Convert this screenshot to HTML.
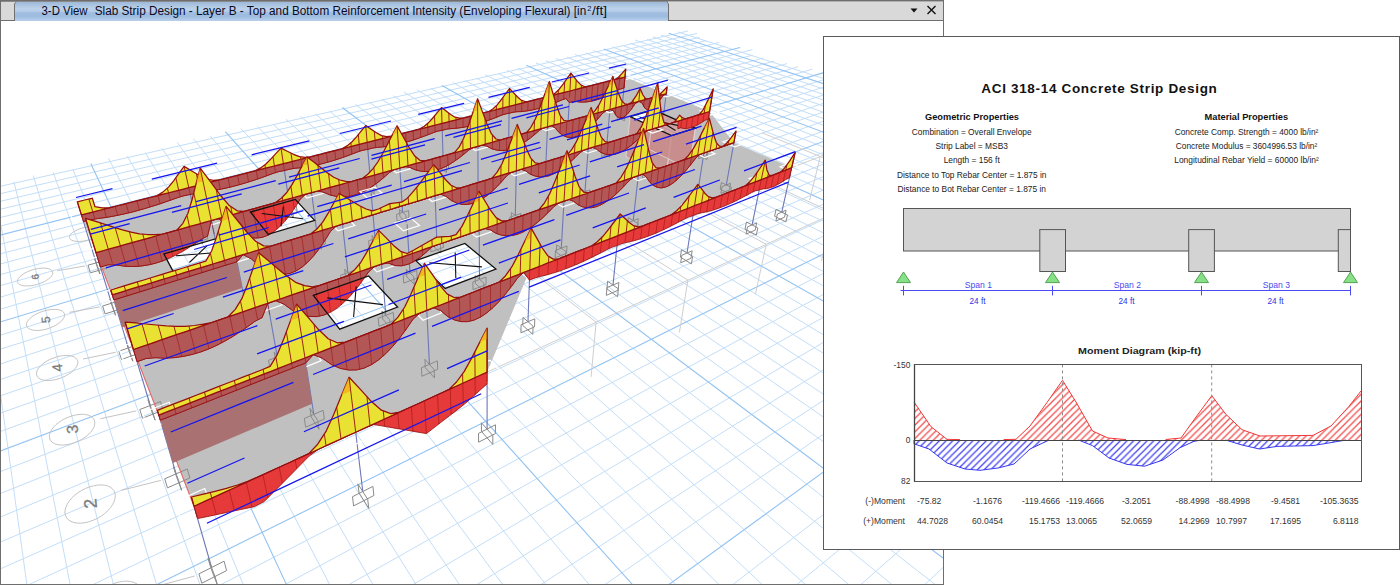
<!DOCTYPE html>
<html><head><meta charset="utf-8"><title>3-D View</title>
<style>
html,body{margin:0;padding:0;background:#fff;}
body{width:1400px;height:585px;position:relative;overflow:hidden;font-family:"Liberation Sans",sans-serif;}
#view{position:absolute;left:0;top:0;width:944px;height:585px;}
#pop{position:absolute;left:823px;top:36px;width:575px;height:512px;border:1px solid #5a5a5a;background:#fff;}
#pop svg{position:absolute;left:-824px;top:-37px;}
</style></head><body>
<svg id="view" width="944" height="585" viewBox="0 0 944 585">
<rect x="0" y="0" width="944" height="585" fill="#fff"/>
<g id="scene">
<path d="M-5566.1 6772.8 L-477.1 289.8 M-5186.6 6772.8 L-446.7 285.5 M-4807.2 6772.8 L-413.8 276.8 M-4427.7 6772.8 L-381.3 267.3 M-4048.3 6772.8 L-351.5 260.7 M-3668.8 6772.8 L-325.1 259.1 M-3289.4 6772.8 L-296.3 252.1 M-2530.5 6772.8 L-241.1 238.4 M-2083.5 6544.7 L-215.6 234.9 M-1445.5 5423.9 L-189.4 226.7 M-989.1 4622.0 L-164.3 220.1 M-646.4 4019.9 L-140.4 216.7 M-379.6 3551.2 L-116.6 209.3 M-166.0 3176.0 L-93.6 204.5 M154.6 2612.7 L-49.2 194.7 M278.0 2395.9 L-27.6 191.4 M383.7 2210.0 L-6.8 185.9 M475.5 2048.9 L13.9 181.9 M555.7 1907.8 L33.3 175.6 M626.6 1783.4 L53.2 172.3 M689.6 1672.7 L72.8 169.2 M796.7 1484.5 L108.5 158.4 M842.6 1403.9 L127.4 156.2 M884.3 1330.5 L145.1 152.6 M922.4 1263.6 L161.9 148.1 M957.4 1202.2 L177.1 142.4 M989.5 1145.7 L193.4 138.6 M1019.2 1093.5 L210.3 136.1 M1072.2 1000.4 L240.8 128.5 M1096.0 958.7 L257.5 126.7 M1118.2 919.7 L273.3 124.3 M1138.9 883.2 L285.9 119.2 M1158.4 849.0 L300.5 116.3 M1176.7 816.9 L315.2 113.8 M1193.9 786.7 L329.4 111.1 M1225.4 731.3 L355.2 104.4 M1239.9 705.8 L369.0 102.0 M1253.6 681.7 L381.6 99.1 M1266.7 658.8 L393.4 95.8 M1279.0 637.1 L403.9 92.0 M1290.8 616.4 L417.2 90.0 M1302.0 596.7 L430.4 88.2 M1322.9 560.0 L452.7 82.5 M1332.7 542.8 L465.1 80.6 M1342.0 526.4 L476.1 78.1 M1350.9 510.7 L485.5 74.9 M1359.5 495.7 L498.3 73.5 M1367.7 481.3 L506.9 70.3 M1375.6 467.4 L517.8 68.2 M1390.4 441.3 L536.0 62.8 M1397.5 429.0 L546.1 60.8 M1404.2 417.2 L555.8 58.6 M1410.7 405.7 L566.9 57.1 M1417.0 394.7 L574.8 54.4 M1423.0 384.1 L585.7 53.0 M1428.9 373.8 L593.6 50.5 M1440.0 354.3 L612.0 46.8 M1445.2 345.0 L622.7 45.5 M1450.4 336.1 L630.3 43.3 M1455.3 327.4 L634.9 40.0 M1460.1 319.0 L647.1 39.5 M1464.7 310.8 L652.9 36.9 M1469.2 302.9 L661.1 35.1 M1477.8 287.8 L677.8 31.9 M-2213.3 6772.8 L1481.6 281.2 M-2774.7 6772.8 L1445.1 276.4 M-3897.6 6772.8 L1383.8 255.2 M-4459.0 6772.8 L1354.2 246.4 M-5020.4 6772.8 L1325.6 237.9 M-5581.9 6772.8 L1298.8 229.0 M-5378.1 6096.8 L1276.7 217.2 M-4236.9 4737.0 L1248.3 212.2 M-3500.4 3859.5 L1231.6 198.8 M-2605.8 2793.7 L1182.0 187.5 M-2313.9 2445.9 L1162.2 179.5 M-2082.5 2170.2 L1136.6 175.9 M-1894.6 1946.3 L1123.5 165.3 M-1739.0 1760.9 L1103.0 159.7 M-1608.0 1604.9 L1082.9 154.5 M-1496.2 1471.7 L1061.8 150.2 M-1315.6 1256.4 L1029.9 137.7 M-1241.5 1168.2 L1012.2 132.9 M-1175.9 1090.0 L998.9 126.5 M-1117.3 1020.2 L980.0 123.0 M-1064.6 957.4 L961.6 119.5 M-1017.1 900.8 L948.9 113.9 M-973.9 849.4 L930.3 111.0 M-898.6 759.6 L908.9 99.9 M-865.5 720.2 L896.3 95.4 M-835.0 683.9 L885.5 90.6 M-806.8 650.3 L871.5 87.2 M-780.6 619.1 L855.6 84.5 M-756.3 590.1 L838.2 82.5 M-733.6 563.0 L831.3 77.3 M-692.5 514.1 L812.4 69.1 M-673.8 491.8 L798.0 66.8 M-656.3 470.9 L787.1 63.6 M-639.7 451.2 L774.0 61.1 M-624.1 432.6 L763.4 58.0 M-609.4 415.0 L752.4 55.2 M-595.4 398.4 L752.4 49.6 M-569.6 367.6 L725.0 46.0 M-557.6 353.4 L719.3 42.4 M-546.2 339.8 L706.2 40.6 M-535.4 326.9 L699.5 37.4 M-525.0 314.5 L697.1 33.4 M-515.1 302.7 L688.0 31.0" stroke="#c3def8" stroke-width="1" fill="none"/>
<path d="M-5945.5 6772.8 L-511.6 298.5 M-2909.9 6772.8 L-269.0 246.8 M8.8 2868.8 L-71.1 202.3 M745.9 1573.7 L90.8 163.4 M1046.7 1045.3 L225.3 131.7 M1210.1 758.2 L342.2 107.5 M1312.7 577.9 L442.0 85.5 M1383.2 454.1 L526.3 65.2 M1434.5 363.9 L603.8 49.0 M1473.6 295.2 L668.7 33.2 M-3336.2 6772.8 L1413.3 266.2 M-2985.7 3246.4 L1205.8 193.5 M-1399.7 1356.7 L1048.2 142.5 M-934.6 802.5 L916.2 106.5 M-712.4 537.7 L825.2 72.1 M-582.1 382.6 L740.1 47.5" stroke="#93c3f2" stroke-width="1.1" fill="none"/>
<path d="M487.1 372.1 L925.1 171.6 M791.7 167.7 L852.5 144.0 M529.8 270.1 L596.1 322.2 M596.1 322.2 L591.1 376.8 M618.0 235.6 L687.9 280.2 M687.9 280.2 L679.4 332.4 M694.5 205.7 L766.3 244.3 M766.3 244.3 L755.4 294.3 M761.3 179.6 L834.0 213.3 M834.0 213.3 L821.4 261.1 M820.3 156.5 L893.1 186.2 M893.1 186.2 L879.2 232.0 M762.3 132.9 L820.3 156.5 M820.3 156.5 L809.7 200.0" stroke="#cfcfcf" stroke-width="1" fill="none"/>
<text x="35.3" y="280.4" font-family="Liberation Sans, sans-serif" font-size="10.0" fill="#7c7c7c" stroke="#7c7c7c" stroke-width="0.3" text-anchor="middle" transform="rotate(-95 35.3 276.9)">6</text>
<text x="45.7" y="323.9" font-family="Liberation Sans, sans-serif" font-size="12.0" fill="#7c7c7c" stroke="#7c7c7c" stroke-width="0.3" text-anchor="middle" transform="rotate(-95 45.7 319.7)">5</text>
<text x="57.4" y="372.6" font-family="Liberation Sans, sans-serif" font-size="14.0" fill="#7c7c7c" stroke="#7c7c7c" stroke-width="0.3" text-anchor="middle" transform="rotate(-95 57.4 367.7)">4</text>
<text x="72.3" y="434.9" font-family="Liberation Sans, sans-serif" font-size="16.0" fill="#7c7c7c" stroke="#7c7c7c" stroke-width="0.3" text-anchor="middle" transform="rotate(-95 72.3 429.3)">3</text>
<text x="90.4" y="509.8" font-family="Liberation Sans, sans-serif" font-size="18.0" fill="#7c7c7c" stroke="#7c7c7c" stroke-width="0.3" text-anchor="middle" transform="rotate(-95 90.4 503.5)">2</text>
<text x="115.1" y="612.4" font-family="Liberation Sans, sans-serif" font-size="20.0" fill="#7c7c7c" stroke="#7c7c7c" stroke-width="0.3" text-anchor="middle" transform="rotate(-95 115.1 605.4)">1</text>
<path d="M52.6 272.0 L52.1 270.9 L51.1 269.9 L49.7 269.1 L48.0 268.6 L45.9 268.2 L43.6 268.1 L41.1 268.2 L38.4 268.5 L35.6 269.0 L32.8 269.8 L30.1 270.7 L27.5 271.7 L25.0 272.9 L22.9 274.3 L21.0 275.7 L19.5 277.1 L18.4 278.5 L17.7 279.9 L17.5 281.3 L17.7 282.5 L18.5 283.6 L19.6 284.5 L21.2 285.2 L23.1 285.7 L25.4 285.9 L27.9 285.9 L30.7 285.7 L33.5 285.3 L36.4 284.6 L39.2 283.7 L42.0 282.7 L44.5 281.5 L46.8 280.2 L48.8 278.8 L50.4 277.4 L51.6 275.9 L52.4 274.5 L52.8 273.2 L52.6 272.0Z M64.5 313.9 L63.8 312.6 L62.7 311.5 L61.2 310.6 L59.3 309.9 L57.1 309.5 L54.5 309.4 L51.8 309.5 L48.9 309.8 L45.9 310.5 L42.8 311.3 L39.9 312.4 L37.1 313.7 L34.5 315.1 L32.1 316.6 L30.1 318.3 L28.5 320.0 L27.3 321.7 L26.6 323.3 L26.4 324.9 L26.7 326.4 L27.5 327.6 L28.8 328.7 L30.5 329.5 L32.7 330.1 L35.1 330.4 L37.9 330.5 L40.9 330.2 L44.0 329.7 L47.1 328.9 L50.2 327.8 L53.1 326.6 L55.9 325.2 L58.3 323.6 L60.4 322.0 L62.2 320.3 L63.4 318.6 L64.3 316.9 L64.6 315.4 L64.5 313.9Z M77.7 360.8 L76.9 359.3 L75.7 358.0 L74.1 356.9 L72.0 356.1 L69.5 355.6 L66.7 355.4 L63.7 355.6 L60.6 356.0 L57.3 356.7 L54.1 357.8 L50.9 359.0 L47.8 360.5 L45.0 362.2 L42.5 364.1 L40.4 366.0 L38.6 368.1 L37.4 370.1 L36.7 372.0 L36.5 373.9 L36.8 375.6 L37.7 377.2 L39.1 378.4 L41.0 379.4 L43.4 380.1 L46.1 380.5 L49.1 380.5 L52.3 380.2 L55.7 379.6 L59.1 378.6 L62.4 377.4 L65.6 375.9 L68.6 374.2 L71.2 372.4 L73.5 370.4 L75.3 368.4 L76.7 366.4 L77.5 364.4 L77.9 362.6 L77.7 360.8Z M94.6 420.9 L93.7 419.0 L92.3 417.4 L90.5 416.1 L88.1 415.1 L85.4 414.5 L82.3 414.3 L79.0 414.5 L75.5 415.0 L72.0 415.9 L68.4 417.1 L64.9 418.7 L61.6 420.5 L58.5 422.6 L55.8 424.9 L53.5 427.2 L51.6 429.7 L50.3 432.2 L49.5 434.6 L49.4 436.9 L49.8 439.0 L50.8 440.9 L52.4 442.4 L54.6 443.7 L57.2 444.5 L60.2 445.0 L63.6 445.0 L67.1 444.7 L70.8 443.9 L74.6 442.7 L78.2 441.2 L81.7 439.4 L85.0 437.3 L87.8 435.0 L90.3 432.6 L92.2 430.2 L93.7 427.7 L94.5 425.3 L94.8 423.0 L94.6 420.9Z M114.9 493.1 L113.9 490.7 L112.3 488.7 L110.1 487.1 L107.5 485.9 L104.4 485.2 L101.0 484.9 L97.4 485.1 L93.5 485.8 L89.6 486.9 L85.6 488.4 L81.8 490.3 L78.1 492.6 L74.8 495.2 L71.8 498.0 L69.3 501.0 L67.3 504.0 L65.9 507.1 L65.1 510.1 L64.9 513.0 L65.5 515.6 L66.7 518.0 L68.5 519.9 L71.0 521.5 L73.9 522.5 L77.3 523.1 L81.0 523.2 L85.0 522.7 L89.2 521.7 L93.3 520.2 L97.4 518.4 L101.2 516.1 L104.7 513.5 L107.9 510.7 L110.5 507.7 L112.6 504.6 L114.1 501.5 L115.0 498.5 L115.3 495.7 L114.9 493.1Z M142.6 591.7 L141.4 588.7 L139.5 586.1 L137.0 584.0 L133.9 582.4 L130.4 581.5 L126.5 581.1 L122.3 581.4 L118.0 582.2 L113.5 583.7 L109.1 585.7 L104.8 588.2 L100.7 591.1 L97.0 594.5 L93.7 598.1 L90.9 602.0 L88.8 606.0 L87.2 610.0 L86.4 614.0 L86.4 617.7 L87.1 621.2 L88.6 624.2 L90.7 626.8 L93.6 628.8 L97.0 630.2 L100.9 631.0 L105.2 631.1 L109.8 630.4 L114.5 629.1 L119.1 627.2 L123.7 624.7 L128.0 621.8 L131.9 618.4 L135.4 614.7 L138.3 610.7 L140.6 606.7 L142.2 602.7 L143.0 598.8 L143.2 595.1 L142.6 591.7Z M100.7 229.8 L100.1 228.9 L99.1 228.1 L97.8 227.5 L96.1 227.0 L94.2 226.7 L92.1 226.6 L89.7 226.7 L87.3 227.0 L84.8 227.4 L82.3 228.0 L79.9 228.8 L77.6 229.7 L75.5 230.7 L73.7 231.8 L72.1 232.9 L70.9 234.1 L70.0 235.3 L69.5 236.5 L69.5 237.6 L69.8 238.6 L70.6 239.5 L71.7 240.2 L73.2 240.8 L75.0 241.2 L77.1 241.4 L79.4 241.5 L81.9 241.3 L84.4 240.9 L87.0 240.4 L89.5 239.6 L91.9 238.8 L94.1 237.8 L96.1 236.7 L97.8 235.5 L99.1 234.3 L100.1 233.1 L100.7 232.0 L100.9 230.9 L100.7 229.8Z M196.5 204.4 L195.7 203.6 L194.7 202.9 L193.3 202.3 L191.6 201.9 L189.8 201.6 L187.7 201.5 L185.6 201.6 L183.3 201.8 L181.1 202.2 L178.9 202.7 L176.7 203.4 L174.8 204.2 L173.0 205.1 L171.5 206.1 L170.2 207.1 L169.3 208.2 L168.7 209.2 L168.5 210.3 L168.7 211.2 L169.2 212.1 L170.1 212.9 L171.4 213.6 L172.9 214.1 L174.7 214.5 L176.7 214.7 L178.9 214.7 L181.2 214.5 L183.5 214.2 L185.8 213.7 L188.0 213.1 L190.1 212.3 L192.0 211.4 L193.6 210.4 L194.9 209.4 L195.9 208.4 L196.6 207.3 L196.9 206.3 L196.9 205.3 L196.5 204.4Z M281.9 181.7 L281.0 181.0 L279.8 180.3 L278.4 179.8 L276.8 179.5 L275.0 179.2 L273.0 179.1 L271.0 179.2 L268.9 179.4 L266.9 179.8 L264.9 180.2 L263.0 180.8 L261.3 181.5 L259.8 182.3 L258.5 183.2 L257.6 184.1 L256.9 185.1 L256.6 186.0 L256.6 186.9 L256.9 187.8 L257.6 188.6 L258.6 189.3 L259.9 189.9 L261.5 190.4 L263.2 190.7 L265.2 190.9 L267.2 190.9 L269.4 190.8 L271.5 190.5 L273.6 190.0 L275.5 189.4 L277.3 188.8 L278.9 188.0 L280.3 187.1 L281.4 186.2 L282.1 185.3 L282.6 184.3 L282.7 183.4 L282.4 182.5 L281.9 181.7Z M358.4 161.4 L357.5 160.7 L356.2 160.1 L354.8 159.7 L353.2 159.3 L351.4 159.1 L349.5 159.1 L347.6 159.1 L345.7 159.3 L343.8 159.6 L342.0 160.0 L340.4 160.6 L338.9 161.2 L337.6 161.9 L336.6 162.7 L335.8 163.6 L335.4 164.4 L335.3 165.2 L335.4 166.1 L335.9 166.9 L336.7 167.6 L337.8 168.2 L339.1 168.7 L340.7 169.2 L342.4 169.5 L344.3 169.6 L346.3 169.6 L348.2 169.5 L350.2 169.2 L352.1 168.8 L353.8 168.3 L355.4 167.7 L356.8 167.0 L357.9 166.2 L358.8 165.4 L359.3 164.6 L359.6 163.7 L359.5 162.9 L359.1 162.1 L358.4 161.4Z M427.4 143.0 L426.4 142.4 L425.1 141.9 L423.7 141.5 L422.1 141.2 L420.4 141.0 L418.6 140.9 L416.8 141.0 L415.0 141.2 L413.2 141.4 L411.6 141.8 L410.1 142.3 L408.8 142.9 L407.8 143.5 L406.9 144.3 L406.4 145.0 L406.1 145.8 L406.1 146.5 L406.4 147.3 L407.0 148.0 L407.9 148.6 L409.1 149.2 L410.4 149.7 L412.0 150.1 L413.7 150.3 L415.5 150.5 L417.3 150.5 L419.2 150.4 L421.0 150.1 L422.7 149.8 L424.3 149.3 L425.7 148.8 L426.9 148.1 L427.8 147.4 L428.5 146.7 L428.9 145.9 L428.9 145.1 L428.7 144.4 L428.2 143.7 L427.4 143.0Z M490.0 126.4 L488.9 125.9 L487.6 125.4 L486.2 125.0 L484.6 124.7 L482.9 124.6 L481.2 124.5 L479.5 124.6 L477.8 124.7 L476.2 125.0 L474.7 125.3 L473.4 125.8 L472.2 126.3 L471.3 126.9 L470.6 127.5 L470.2 128.2 L470.1 128.9 L470.3 129.6 L470.7 130.3 L471.4 130.9 L472.3 131.5 L473.5 132.0 L474.9 132.5 L476.5 132.8 L478.1 133.0 L479.9 133.2 L481.6 133.2 L483.4 133.1 L485.1 132.8 L486.6 132.5 L488.1 132.1 L489.3 131.6 L490.3 131.0 L491.1 130.4 L491.6 129.7 L491.8 129.0 L491.8 128.3 L491.4 127.6 L490.8 127.0 L490.0 126.4Z M546.9 111.3 L545.8 110.8 L544.5 110.4 L543.1 110.0 L541.5 109.8 L539.9 109.6 L538.2 109.5 L536.6 109.6 L535.0 109.7 L533.5 110.0 L532.2 110.3 L531.0 110.7 L530.0 111.2 L529.2 111.7 L528.6 112.3 L528.4 112.9 L528.4 113.5 L528.6 114.2 L529.1 114.8 L529.9 115.4 L530.9 115.9 L532.1 116.4 L533.5 116.8 L535.0 117.1 L536.7 117.3 L538.4 117.4 L540.0 117.4 L541.7 117.3 L543.3 117.1 L544.7 116.9 L546.0 116.5 L547.1 116.0 L548.0 115.5 L548.6 114.9 L549.0 114.3 L549.1 113.7 L548.9 113.0 L548.5 112.4 L547.8 111.8 L546.9 111.3Z M599.0 97.4 L597.9 97.0 L596.5 96.6 L595.1 96.3 L593.6 96.0 L592.0 95.9 L590.4 95.8 L588.9 95.9 L587.4 96.0 L586.0 96.2 L584.7 96.5 L583.6 96.9 L582.7 97.3 L582.1 97.8 L581.7 98.4 L581.5 98.9 L581.6 99.5 L581.9 100.1 L582.5 100.7 L583.4 101.2 L584.4 101.7 L585.6 102.1 L587.0 102.5 L588.5 102.8 L590.1 103.0 L591.7 103.1 L593.4 103.1 L594.9 103.0 L596.4 102.8 L597.8 102.5 L598.9 102.2 L599.9 101.8 L600.7 101.3 L601.2 100.8 L601.5 100.2 L601.5 99.6 L601.2 99.0 L600.7 98.5 L600.0 97.9 L599.0 97.4Z" stroke="#c4c4c4" stroke-width="1" fill="none"/>
<path d="M57.2 270.7 L85.2 266.0 M69.4 312.4 L99.6 306.9 M83.0 359.0 L115.7 352.3 M100.4 418.7 L136.3 410.9 M121.3 490.3 L160.9 480.4 M149.8 588.1 L194.7 576.0" stroke="#c4c4c4" stroke-width="1" fill="none"/>
<defs><clipPath id="cs"><path d="M81.4 214.9 L625.0 77.0 L709.6 111.5 L733.9 142.7 L791.7 167.7 L529.8 270.1 L487.1 372.1 L194.0 506.2Z M163.9 253.9 L221.3 237.2 L232.8 254.1 L173.5 272.1Z M250.5 212.0 L295.3 199.4 L314.6 220.4 L268.1 234.3Z M313.3 295.4 L368.7 276.0 L397.6 307.1 L339.7 329.1Z M415.8 260.6 L464.9 243.4 L495.9 269.1 L445.2 288.4Z M630.1 116.6 L653.4 109.8 L695.3 128.1 L671.6 135.6Z M678.8 120.9 L709.6 111.5 L740.4 124.0 L709.3 134.2Z" clip-rule="evenodd"/></clipPath></defs>
<path d="M81.4 214.9 L625.0 77.0 L709.6 111.5 L733.9 142.7 L791.7 167.7 L529.8 270.1 L487.1 372.1 L194.0 506.2Z M163.9 253.9 L221.3 237.2 L232.8 254.1 L173.5 272.1Z M250.5 212.0 L295.3 199.4 L314.6 220.4 L268.1 234.3Z M313.3 295.4 L368.7 276.0 L397.6 307.1 L339.7 329.1Z M415.8 260.6 L464.9 243.4 L495.9 269.1 L445.2 288.4Z M630.1 116.6 L653.4 109.8 L695.3 128.1 L671.6 135.6Z" fill="#c0c0c0" fill-rule="evenodd"/>
<path d="M81.4 214.9 L96.2 262.9 M188.8 187.7 L199.1 233.6 M283.4 163.7 L289.9 207.7 M367.2 142.4 L370.8 184.7 M442.0 123.4 L443.3 164.0 M509.2 106.4 L508.6 145.4 M569.9 91.0 L567.7 128.6 M625.0 77.0 L621.5 113.3 M96.0 252.7 L111.5 303.2 M211.3 220.5 L221.5 268.9 M311.6 192.6 L317.7 238.9 M399.8 168.0 L402.6 212.4 M477.9 146.3 L478.1 188.9 M547.5 126.9 L545.7 167.8 M609.9 109.5 L606.5 148.8 M666.2 93.8 L661.5 131.7 M112.3 294.8 L128.4 347.9 M236.0 256.8 L246.1 307.6 M342.5 224.1 L347.9 272.8 M435.1 195.7 L436.9 242.3 M516.3 170.8 L515.3 215.4 M588.2 148.7 L585.0 191.5 M652.2 129.1 L647.4 170.2 M709.6 111.5 L703.4 151.0 M133.4 349.5 L150.3 405.5 M267.7 303.3 L277.3 356.9 M381.5 264.1 L385.8 315.3 M479.2 230.4 L479.5 279.5 M564.0 201.2 L561.3 248.2 M638.3 175.6 L633.2 220.6 M703.9 153.0 L697.1 196.2 M733.9 142.7 L726.3 185.0 M158.8 415.1 L176.1 473.8 M305.0 358.0 L313.8 414.4 M426.8 310.4 L429.4 364.4 M529.8 270.1 L528.0 321.8 M618.0 235.6 L613.0 285.0 M694.5 205.7 L687.0 253.0 M761.3 179.6 L752.1 224.9 M791.7 167.7 L781.8 212.1 M194.0 506.2 L211.6 567.5 M355.7 432.2 L362.8 491.5 M487.1 372.1 L487.1 429.1 M371.1 192.4 L375.1 238.7 M407.1 224.3 L410.0 272.9" stroke="#6c78b8" stroke-width="1.1" fill="none"/>
<path d="M88.0 265.2 L104.4 260.6 L106.7 268.1 L90.4 272.8Z M97.6 266.4 L94.9 259.4 L97.2 266.9 L99.9 274.0Z M191.8 235.7 L206.3 231.6 L207.8 238.8 L193.5 242.9Z M201.0 236.7 L197.1 230.5 L198.7 237.7 L202.7 244.0Z M283.5 209.6 L296.3 205.9 L297.3 212.8 L284.6 216.5Z M292.4 210.5 L287.5 205.0 L288.6 211.9 L293.4 217.5Z M365.1 186.3 L376.5 183.1 L377.1 189.7 L365.7 193.0Z M373.7 187.1 L368.1 182.2 L368.6 188.9 L374.2 193.9Z M438.1 165.5 L448.4 162.6 L448.6 169.0 L438.4 172.0Z M446.4 166.2 L440.2 161.9 L440.5 168.3 L446.6 172.7Z M503.9 146.8 L513.2 144.1 L513.1 150.3 L503.8 153.0Z M511.9 147.4 L505.3 143.5 L505.2 149.6 L511.8 153.7Z M563.5 129.8 L571.9 127.4 L571.6 133.4 L563.1 135.8Z M571.2 130.4 L564.3 126.8 L564.0 132.8 L570.8 136.4Z M617.7 114.4 L625.4 112.2 L624.8 117.9 L617.1 120.2Z M625.1 114.9 L618.0 111.6 L617.4 117.4 L624.5 120.7Z M102.6 306.0 L120.3 300.5 L122.7 308.4 L105.1 313.9Z M113.1 307.4 L110.0 299.1 L112.4 307.0 L115.5 315.3Z M213.7 271.3 L229.1 266.5 L230.7 274.1 L215.4 279.0Z M223.8 272.5 L219.2 265.4 L220.8 272.9 L225.4 280.2Z M310.9 241.0 L324.5 236.8 L325.4 244.1 L311.9 248.3Z M320.6 242.1 L314.9 235.8 L315.9 243.0 L321.5 249.4Z M396.6 214.3 L408.6 210.6 L409.0 217.5 L397.1 221.3Z M405.9 215.2 L399.5 209.6 L399.9 216.6 L406.3 222.3Z M472.8 190.5 L483.5 187.2 L483.5 193.9 L472.8 197.3Z M481.7 191.4 L474.7 186.4 L474.7 193.1 L481.7 198.2Z M540.9 169.3 L550.5 166.3 L550.2 172.8 L540.6 175.8Z M549.4 170.1 L542.0 165.6 L541.7 172.0 L549.1 176.6Z M602.1 150.2 L610.8 147.5 L610.2 153.7 L601.6 156.5Z M610.4 150.9 L602.6 146.8 L602.1 153.1 L609.8 157.2Z M657.5 132.9 L665.4 130.5 L664.6 136.5 L656.8 139.0Z M665.5 133.5 L657.5 129.9 L656.8 135.9 L664.7 139.6Z M118.9 351.2 L137.9 344.7 L140.3 352.9 L121.5 359.5Z M130.3 352.8 L126.6 343.1 L129.1 351.3 L132.8 361.2Z M237.8 310.5 L254.2 304.9 L255.7 312.8 L239.5 318.4Z M248.7 311.9 L243.4 303.5 L245.0 311.4 L250.3 319.9Z M340.7 275.2 L355.0 270.3 L355.8 278.0 L341.6 282.9Z M351.2 276.5 L344.7 269.2 L345.5 276.7 L352.0 284.1Z M430.6 244.4 L443.1 240.2 L443.4 247.5 L430.9 251.8Z M440.6 245.5 L433.2 239.1 L433.5 246.4 L440.8 252.9Z M509.8 217.3 L520.9 213.5 L520.7 220.5 L509.7 224.4Z M519.4 218.3 L511.4 212.6 L511.3 219.6 L519.2 225.3Z M580.1 193.2 L590.0 189.9 L589.4 196.6 L579.6 200.0Z M589.3 194.1 L580.9 189.0 L580.4 195.8 L588.7 200.9Z M642.9 171.7 L651.8 168.7 L651.0 175.2 L642.2 178.3Z M651.7 172.5 L643.0 167.9 L642.3 174.4 L650.9 179.0Z M699.4 152.4 L707.4 149.6 L706.4 155.9 L698.4 158.7Z M707.9 153.1 L699.0 149.0 L698.0 155.2 L706.8 159.4Z M139.8 409.5 L160.5 401.6 L163.0 410.2 L142.5 418.2Z M152.5 411.5 L148.0 399.7 L150.6 408.3 L155.1 420.2Z M268.5 360.3 L286.0 353.5 L287.5 361.9 L270.0 368.6Z M280.5 362.0 L274.1 351.9 L275.6 360.2 L282.0 370.3Z M378.2 318.2 L393.3 312.5 L393.9 320.5 L378.9 326.3Z M389.7 319.7 L382.0 311.1 L382.7 319.0 L390.3 327.8Z M472.9 282.0 L486.0 277.0 L486.0 284.6 L473.0 289.7Z M483.8 283.2 L475.2 275.7 L475.3 283.4 L483.9 291.0Z M555.5 250.4 L567.0 246.0 L566.5 253.3 L555.1 257.8Z M565.9 251.5 L556.7 244.9 L556.3 252.2 L565.4 258.9Z M628.1 222.6 L638.3 218.7 L637.5 225.7 L627.4 229.7Z M638.1 223.5 L628.4 217.7 L627.7 224.8 L637.3 230.7Z M692.5 197.9 L701.6 194.4 L700.5 201.3 L691.5 204.7Z M702.0 198.8 L692.1 193.6 L691.1 200.4 L700.9 205.6Z M722.0 186.6 L730.6 183.3 L729.4 190.0 L720.9 193.3Z M731.4 187.4 L721.4 182.5 L720.2 189.2 L730.1 194.1Z M164.7 478.8 L187.3 469.0 L189.9 478.0 L167.5 487.8Z M178.9 481.2 L173.4 466.6 L176.1 475.6 L181.6 490.3Z M304.3 418.5 L323.1 410.3 L324.4 419.0 L305.7 427.2Z M317.7 420.5 L309.9 408.3 L311.3 417.0 L319.0 429.3Z M421.4 367.8 L437.4 360.9 L437.7 369.3 L421.9 376.3Z M434.1 369.6 L424.9 359.3 L425.3 367.6 L434.5 378.0Z M521.1 324.7 L534.8 318.8 L534.5 326.9 L520.9 332.8Z M533.1 326.2 L523.0 317.4 L522.7 325.4 L532.8 334.3Z M607.0 287.6 L618.9 282.5 L618.1 290.2 L606.3 295.4Z M618.4 288.9 L607.6 281.2 L606.9 288.9 L617.6 296.7Z M681.8 255.3 L692.2 250.8 L691.0 258.2 L680.7 262.8Z M692.6 256.4 L681.5 249.7 L680.4 257.1 L691.4 263.9Z M747.5 226.9 L756.7 222.9 L755.2 230.1 L746.0 234.1Z M757.8 227.9 L746.5 222.0 L745.0 229.1 L756.3 235.1Z M777.4 214.0 L786.1 210.2 L784.5 217.2 L775.9 221.0Z M787.5 214.9 L776.1 209.3 L774.6 216.3 L785.9 221.9Z M198.9 573.9 L224.1 561.2 L226.6 570.6 L201.8 583.2Z M215.2 577.1 L208.1 558.2 L210.7 567.5 L217.9 586.4Z M352.5 496.7 L372.9 486.4 L373.9 495.5 L353.6 505.9Z M367.7 499.3 L357.9 483.9 L359.1 493.0 L368.8 508.5Z M478.5 433.4 L495.5 424.8 L495.4 433.6 L478.6 442.2Z M492.8 435.5 L481.4 422.8 L481.5 431.5 L492.8 444.4Z M368.6 240.8 L381.6 236.6 L382.2 243.9 L369.3 248.1Z M378.4 241.9 L372.0 235.6 L372.6 242.8 L379.0 249.2Z M403.2 275.4 L416.8 270.5 L417.2 278.1 L403.7 283.1Z M413.8 276.6 L406.3 269.3 L406.8 276.9 L414.2 284.3Z" stroke="#8a8a8a" stroke-width="1" fill="none"/>
<path d="M630.1 116.6 L671.6 135.6 L666.0 177.3 L626.0 156.6Z" fill="#c88c8c" fill-opacity="0.78" stroke="#e8d8d8" stroke-width="0.8"/>
<path d="M671.6 135.6 L695.3 128.1 L689.2 169.1 L666.0 177.3Z" fill="#c88c8c" fill-opacity="0.78" stroke="#e8d8d8" stroke-width="0.8"/>
<path d="M695.3 128.1 L653.4 109.8 L648.7 149.2 L689.2 169.1Z" fill="#c88c8c" fill-opacity="0.78" stroke="#e8d8d8" stroke-width="0.8"/>
<path d="M96.0 252.7 L194.0 506.2" stroke="#e06a6a" stroke-width="1.1"/>
<path d="M70.3 213.7 L89.6 208.8 L92.6 216.2 L73.0 221.2Z" fill="none" stroke="#fff" stroke-width="1.2"/>
<path d="M178.1 186.6 L195.1 182.3 L199.6 188.7 L182.4 193.2Z" fill="none" stroke="#fff" stroke-width="1.2"/>
<path d="M273.0 162.7 L288.1 158.9 L293.8 164.6 L278.6 168.5Z" fill="none" stroke="#fff" stroke-width="1.2"/>
<path d="M357.2 141.5 L370.6 138.2 L377.2 143.2 L363.7 146.7Z" fill="none" stroke="#fff" stroke-width="1.2"/>
<path d="M432.4 122.6 L444.4 119.6 L451.6 124.2 L439.6 127.3Z" fill="none" stroke="#fff" stroke-width="1.2"/>
<path d="M500.0 105.7 L510.8 103.0 L518.5 107.0 L507.6 109.8Z" fill="none" stroke="#fff" stroke-width="1.2"/>
<path d="M561.0 90.3 L570.8 87.9 L578.9 91.6 L569.0 94.1Z" fill="none" stroke="#fff" stroke-width="1.2"/>
<path d="M616.4 76.4 L625.3 74.2 L633.6 77.5 L624.7 79.8Z" fill="none" stroke="#fff" stroke-width="1.2"/>
<path d="M81.4 214.9 L88.6 213.1 L95.6 211.3 L96.2 211.2 L96.3 211.1 L102.7 209.5 L109.6 207.8 L116.5 206.0 L123.4 204.3 L130.2 202.5 L136.9 200.8 L143.6 199.1 L150.2 197.5 L156.8 195.8 L163.3 194.1 L169.8 192.5 L176.2 190.9 L182.5 189.3 L188.8 187.7 L195.1 186.1 L201.3 184.5 L207.5 182.9 L213.6 181.4 L219.7 179.8 L225.7 178.3 L231.7 176.8 L237.6 175.3 L243.5 173.8 L249.3 172.3 L255.1 170.8 L260.8 169.4 L266.5 167.9 L272.2 166.5 L277.8 165.1 L283.4 163.7 L288.9 162.3 L294.4 160.9 L299.8 159.5 L305.3 158.1 L310.6 156.8 L316.0 155.4 L321.3 154.1 L326.5 152.7 L331.7 151.4 L336.9 150.1 L342.0 148.8 L347.1 147.5 L352.2 146.2 L357.2 144.9 L362.2 143.7 L367.2 142.4 L372.1 141.1 L377.0 139.9 L381.9 138.7 L386.7 137.5 L391.5 136.2 L396.2 135.0 L400.9 133.8 L405.6 132.6 L410.3 131.5 L414.9 130.3 L419.5 129.1 L424.1 128.0 L428.6 126.8 L433.1 125.7 L437.6 124.5 L442.0 123.4 L446.4 122.3 L450.8 121.2 L455.2 120.1 L459.5 119.0 L463.8 117.9 L468.0 116.8 L472.3 115.7 L476.5 114.7 L480.7 113.6 L484.8 112.5 L489.0 111.5 L493.1 110.5 L497.1 109.4 L501.2 108.4 L505.2 107.4 L509.2 106.4 L513.2 105.3 L517.1 104.3 L521.1 103.3 L525.0 102.4 L528.8 101.4 L532.7 100.4 L536.5 99.4 L540.3 98.5 L544.1 97.5 L547.8 96.5 L551.6 95.6 L555.3 94.7 L559.0 93.7 L562.6 92.8 L566.3 91.9 L569.9 91.0 L573.5 90.0 L577.1 89.1 L580.6 88.2 L584.2 87.3 L587.7 86.4 L591.2 85.6 L594.6 84.7 L598.1 83.8 L601.5 82.9 L604.9 82.1 L608.3 81.2 L611.7 80.3 L615.1 79.5 L618.4 78.6 L621.7 77.8 L625.0 77.0 L623.9 88.0 L620.7 88.9 L617.3 90.2 L613.9 92.2 L610.5 94.0 L607.1 95.6 L603.7 97.2 L600.3 98.6 L596.9 99.7 L593.4 100.7 L590.0 101.4 L586.6 101.9 L583.2 102.1 L579.7 102.0 L576.3 101.5 L572.8 101.5 L569.2 102.4 L565.9 98.5 L562.3 99.7 L558.6 101.3 L554.9 102.8 L551.2 104.2 L547.5 105.6 L543.7 106.8 L540.0 108.0 L536.2 109.0 L532.4 109.9 L528.6 110.6 L524.7 111.2 L520.9 111.6 L517.0 111.7 L513.1 112.2 L509.1 113.2 L505.1 114.0 L501.1 115.3 L497.1 117.0 L493.0 118.6 L488.9 120.1 L484.8 121.6 L480.7 123.0 L476.6 124.2 L472.4 125.3 L468.2 126.3 L463.9 127.2 L459.6 127.8 L455.3 128.3 L451.0 128.6 L446.6 129.1 L442.2 130.3 L437.8 131.1 L433.4 132.6 L428.9 134.4 L424.4 136.1 L419.9 137.7 L415.4 139.3 L410.8 140.8 L406.2 142.2 L401.5 143.4 L396.8 144.5 L392.1 145.5 L387.3 146.3 L382.5 146.9 L377.6 147.3 L372.7 148.0 L367.8 149.3 L362.8 150.2 L357.9 151.8 L352.9 153.7 L348.0 155.6 L342.9 157.4 L337.9 159.1 L332.8 160.7 L327.6 162.2 L322.4 163.6 L317.1 164.9 L311.8 166.0 L306.4 166.9 L301.0 167.7 L295.4 168.2 L289.9 169.1 L284.4 170.5 L278.8 171.6 L273.3 173.3 L267.7 175.4 L262.2 177.4 L256.5 179.4 L250.9 181.2 L245.1 183.0 L239.3 184.7 L233.4 186.3 L227.5 187.7 L221.5 189.0 L215.4 190.1 L209.2 191.1 L202.9 191.8 L196.6 192.8 L190.4 194.4 L184.0 195.7 L177.7 197.6 L171.5 199.8 L165.2 202.0 L158.9 204.2 L152.4 206.2 L145.9 208.2 L139.3 210.1 L132.7 211.9 L125.9 213.5 L119.1 215.0 L112.1 216.4 L105.0 217.6 L98.5 218.4 L98.4 218.4 L97.8 218.5 L90.6 219.8 L83.5 221.6Z" fill="#e63a3a" stroke="#960e0e" stroke-width="0.8" stroke-linejoin="round"/>
<path d="M81.4 214.9 L88.6 213.1 L95.6 211.3 L96.2 211.2 L96.3 211.1 L102.7 209.5 L109.6 207.8 L116.5 206.0 L123.4 204.3 L130.2 202.5 L136.9 200.8 L143.6 199.1 L150.2 197.5 L156.8 195.8 L163.3 194.1 L169.8 192.5 L176.2 190.9 L182.5 189.3 L188.8 187.7 L195.1 186.1 L201.3 184.5 L207.5 182.9 L213.6 181.4 L219.7 179.8 L225.7 178.3 L231.7 176.8 L237.6 175.3 L243.5 173.8 L249.3 172.3 L255.1 170.8 L260.8 169.4 L266.5 167.9 L272.2 166.5 L277.8 165.1 L283.4 163.7 L288.9 162.3 L294.4 160.9 L299.8 159.5 L305.3 158.1 L310.6 156.8 L316.0 155.4 L321.3 154.1 L326.5 152.7 L331.7 151.4 L336.9 150.1 L342.0 148.8 L347.1 147.5 L352.2 146.2 L357.2 144.9 L362.2 143.7 L367.2 142.4 L372.1 141.1 L377.0 139.9 L381.9 138.7 L386.7 137.5 L391.5 136.2 L396.2 135.0 L400.9 133.8 L405.6 132.6 L410.3 131.5 L414.9 130.3 L419.5 129.1 L424.1 128.0 L428.6 126.8 L433.1 125.7 L437.6 124.5 L442.0 123.4 L446.4 122.3 L450.8 121.2 L455.2 120.1 L459.5 119.0 L463.8 117.9 L468.0 116.8 L472.3 115.7 L476.5 114.7 L480.7 113.6 L484.8 112.5 L489.0 111.5 L493.1 110.5 L497.1 109.4 L501.2 108.4 L505.2 107.4 L509.2 106.4 L513.2 105.3 L517.1 104.3 L521.1 103.3 L525.0 102.4 L528.8 101.4 L532.7 100.4 L536.5 99.4 L540.3 98.5 L544.1 97.5 L547.8 96.5 L551.6 95.6 L555.3 94.7 L559.0 93.7 L562.6 92.8 L566.3 91.9 L569.9 91.0 L573.5 90.0 L577.1 89.1 L580.6 88.2 L584.2 87.3 L587.7 86.4 L591.2 85.6 L594.6 84.7 L598.1 83.8 L601.5 82.9 L604.9 82.1 L608.3 81.2 L611.7 80.3 L615.1 79.5 L618.4 78.6 L621.7 77.8 L625.0 77.0 L623.9 88.0 L620.7 88.9 L617.3 90.2 L613.9 92.2 L610.5 94.0 L607.1 95.6 L603.7 97.2 L600.3 98.6 L596.9 99.7 L593.4 100.7 L590.0 101.4 L586.6 101.9 L583.2 102.1 L579.7 102.0 L576.3 101.5 L572.8 101.5 L569.2 102.4 L565.9 98.5 L562.3 99.7 L558.6 101.3 L554.9 102.8 L551.2 104.2 L547.5 105.6 L543.7 106.8 L540.0 108.0 L536.2 109.0 L532.4 109.9 L528.6 110.6 L524.7 111.2 L520.9 111.6 L517.0 111.7 L513.1 112.2 L509.1 113.2 L505.1 114.0 L501.1 115.3 L497.1 117.0 L493.0 118.6 L488.9 120.1 L484.8 121.6 L480.7 123.0 L476.6 124.2 L472.4 125.3 L468.2 126.3 L463.9 127.2 L459.6 127.8 L455.3 128.3 L451.0 128.6 L446.6 129.1 L442.2 130.3 L437.8 131.1 L433.4 132.6 L428.9 134.4 L424.4 136.1 L419.9 137.7 L415.4 139.3 L410.8 140.8 L406.2 142.2 L401.5 143.4 L396.8 144.5 L392.1 145.5 L387.3 146.3 L382.5 146.9 L377.6 147.3 L372.7 148.0 L367.8 149.3 L362.8 150.2 L357.9 151.8 L352.9 153.7 L348.0 155.6 L342.9 157.4 L337.9 159.1 L332.8 160.7 L327.6 162.2 L322.4 163.6 L317.1 164.9 L311.8 166.0 L306.4 166.9 L301.0 167.7 L295.4 168.2 L289.9 169.1 L284.4 170.5 L278.8 171.6 L273.3 173.3 L267.7 175.4 L262.2 177.4 L256.5 179.4 L250.9 181.2 L245.1 183.0 L239.3 184.7 L233.4 186.3 L227.5 187.7 L221.5 189.0 L215.4 190.1 L209.2 191.1 L202.9 191.8 L196.6 192.8 L190.4 194.4 L184.0 195.7 L177.7 197.6 L171.5 199.8 L165.2 202.0 L158.9 204.2 L152.4 206.2 L145.9 208.2 L139.3 210.1 L132.7 211.9 L125.9 213.5 L119.1 215.0 L112.1 216.4 L105.0 217.6 L98.5 218.4 L98.4 218.4 L97.8 218.5 L90.6 219.8 L83.5 221.6Z" fill="#b35656" stroke="#960e0e" stroke-width="0.8" stroke-linejoin="round" clip-path="url(#cs)"/>
<path d="M81.4 214.9 L83.5 221.6 M92.8 212.0 L94.8 218.7 M104.1 209.2 L106.4 217.3 M115.2 206.4 L117.7 215.3 M126.1 203.6 L128.6 212.9 M136.9 200.8 L139.3 210.1 M147.6 198.1 L149.8 207.0 M158.1 195.5 L160.1 203.7 M168.5 192.8 L170.3 200.3 M178.7 190.2 L180.2 196.6 M188.8 187.7 L190.3 194.0 M198.8 185.1 L200.3 191.9 M208.7 182.6 L210.4 190.9 M218.5 180.1 L220.3 189.2 M228.1 177.7 L229.9 187.1 M237.6 175.3 L239.3 184.7 M247.0 172.9 L248.6 182.0 M256.2 170.6 L257.7 179.0 M265.4 168.2 L266.6 175.8 M274.4 165.9 L275.5 172.5 M283.4 163.7 L284.4 170.5 M292.2 161.4 L293.2 168.2 M300.9 159.2 L302.1 167.6 M309.6 157.0 L310.7 166.2 M318.1 154.9 L319.3 164.4 M326.5 152.7 L327.6 162.2 M334.8 150.6 L335.8 159.7 M343.1 148.5 L343.9 157.0 M351.2 146.5 L351.9 154.1 M359.2 144.4 L359.8 151.0 M367.2 142.4 L367.8 149.3 M375.1 140.4 L375.6 147.2 M382.8 138.4 L383.5 146.8 M390.5 136.5 L391.1 145.7 M398.1 134.5 L398.7 144.1 M405.6 132.6 L406.2 142.2 M413.1 130.8 L413.5 139.9 M420.4 128.9 L420.8 137.4 M427.7 127.0 L428.0 134.7 M434.9 125.2 L435.1 131.8 M442.0 123.4 L442.2 130.3 M449.1 121.6 L449.2 128.5 M456.0 119.9 L456.2 128.2 M462.9 118.1 L463.1 127.3 M469.7 116.4 L469.9 125.9 M476.5 114.7 L476.6 124.2 M483.2 113.0 L483.2 122.1 M489.8 111.3 L489.8 119.8 M496.3 109.6 L496.3 117.3 M502.8 108.0 L502.7 114.6 M509.2 106.4 L509.1 112.9 M515.6 104.7 L515.4 111.6 M521.8 103.1 L521.6 111.5 M528.1 101.6 L527.8 110.8 M534.2 100.0 L533.9 109.6 M540.3 98.5 L540.0 108.0 M546.3 96.9 L546.0 106.1 M552.3 95.4 L551.9 103.9 M558.2 93.9 L557.9 101.6 M564.1 92.4 L563.7 99.0 M569.9 91.0 L569.5 97.5 M575.7 89.5 L574.9 100.9 M581.3 88.0 L580.4 102.1 M587.0 86.6 L585.9 102.0 M592.6 85.2 L591.4 101.2 M598.1 83.8 L596.9 99.7 M603.6 82.4 L602.3 97.7 M609.0 81.0 L607.8 95.3 M614.4 79.7 L613.2 92.5 M619.7 78.3 L618.7 89.4 M625.0 77.0 L623.9 88.0" stroke="#960e0e" stroke-width="0.7" fill="none" opacity="0.75"/>
<path d="M81.4 214.9 L88.6 213.1 L95.6 211.3 L96.2 211.2 L96.3 211.1 L102.7 209.5 L109.6 207.8 L116.5 206.0 L123.4 204.3 L130.2 202.5 L136.9 200.8 L143.6 199.1 L150.2 197.5 L156.8 195.8 L163.3 194.1 L169.8 192.5 L176.2 190.9 L182.5 189.3 L188.8 187.7 L195.1 186.1 L201.3 184.5 L207.5 182.9 L213.6 181.4 L219.7 179.8 L225.7 178.3 L231.7 176.8 L237.6 175.3 L243.5 173.8 L249.3 172.3 L255.1 170.8 L260.8 169.4 L266.5 167.9 L272.2 166.5 L277.8 165.1 L283.4 163.7 L288.9 162.3 L294.4 160.9 L299.8 159.5 L305.3 158.1 L310.6 156.8 L316.0 155.4 L321.3 154.1 L326.5 152.7 L331.7 151.4 L336.9 150.1 L342.0 148.8 L347.1 147.5 L352.2 146.2 L357.2 144.9 L362.2 143.7 L367.2 142.4 L372.1 141.1 L377.0 139.9 L381.9 138.7 L386.7 137.5 L391.5 136.2 L396.2 135.0 L400.9 133.8 L405.6 132.6 L410.3 131.5 L414.9 130.3 L419.5 129.1 L424.1 128.0 L428.6 126.8 L433.1 125.7 L437.6 124.5 L442.0 123.4 L446.4 122.3 L450.8 121.2 L455.2 120.1 L459.5 119.0 L463.8 117.9 L468.0 116.8 L472.3 115.7 L476.5 114.7 L480.7 113.6 L484.8 112.5 L489.0 111.5 L493.1 110.5 L497.1 109.4 L501.2 108.4 L505.2 107.4 L509.2 106.4 L513.2 105.3 L517.1 104.3 L521.1 103.3 L525.0 102.4 L528.8 101.4 L532.7 100.4 L536.5 99.4 L540.3 98.5 L544.1 97.5 L547.8 96.5 L551.6 95.6 L555.3 94.7 L559.0 93.7 L562.6 92.8 L566.3 91.9 L569.9 91.0 L573.5 90.0 L577.1 89.1 L580.6 88.2 L584.2 87.3 L587.7 86.4 L591.2 85.6 L594.6 84.7 L598.1 83.8 L601.5 82.9 L604.9 82.1 L608.3 81.2 L611.7 80.3 L615.1 79.5 L618.4 78.6 L621.7 77.8 L625.0 77.0 L625.7 69.1 L622.1 73.3 L618.5 77.2 L615.1 79.5 L611.7 80.3 L608.3 81.2 L604.9 82.1 L601.5 82.9 L598.1 83.8 L594.6 84.7 L591.2 85.6 L587.7 86.4 L584.2 86.5 L580.9 84.9 L577.6 81.6 L574.3 77.3 L570.9 73.1 L567.0 78.6 L563.1 84.1 L559.2 89.2 L555.4 93.0 L551.6 95.6 L547.8 96.5 L544.1 97.5 L540.3 98.5 L536.5 99.4 L532.7 100.4 L528.8 101.4 L525.0 101.5 L521.1 100.1 L517.3 96.8 L513.4 92.6 L509.5 88.5 L505.4 94.0 L501.3 99.7 L497.2 104.9 L493.1 108.8 L489.0 111.5 L484.8 112.5 L480.7 113.6 L476.5 114.7 L472.3 115.7 L468.0 116.8 L463.8 117.9 L459.5 118.2 L455.1 117.2 L450.6 114.5 L446.1 111.0 L441.5 107.6 L437.2 112.7 L432.8 118.0 L428.4 122.8 L424.0 126.5 L419.5 129.1 L414.9 130.3 L410.3 131.5 L405.6 132.6 L400.9 133.8 L396.2 135.0 L391.5 136.2 L386.6 136.7 L381.6 135.6 L376.4 132.8 L371.1 129.2 L365.7 125.6 L361.1 131.2 L356.5 136.8 L351.8 142.0 L347.0 145.9 L342.0 148.8 L336.9 150.1 L331.7 151.4 L326.5 152.7 L321.3 154.1 L316.0 155.4 L310.6 156.8 L305.2 157.4 L299.5 156.6 L293.5 154.3 L287.3 151.2 L281.0 148.1 L276.0 153.4 L271.0 158.9 L265.9 164.0 L260.6 167.9 L255.1 170.8 L249.3 172.3 L243.5 173.8 L237.6 175.3 L231.7 176.8 L225.7 178.3 L219.7 179.8 L213.4 180.4 L206.7 179.0 L199.4 175.5 L191.8 171.0 L184.1 166.4 L178.9 173.4 L173.8 180.6 L168.5 187.1 L162.8 192.1 L156.8 195.8 L150.2 197.5 L143.6 199.1 L136.9 200.8 L130.2 202.5 L123.4 204.3 L116.5 206.0 L109.6 207.7 L102.2 207.8 L95.0 206.7 L92.3 198.1 L91.7 198.3 L84.6 200.0 L77.3 201.8Z" fill="#e9e232" stroke="#960e0e" stroke-width="1.25" stroke-linejoin="round"/>
<path d="M81.4 214.9 L77.3 201.8 M92.8 212.0 L88.9 199.0 M168.5 192.8 L167.4 188.4 M178.7 190.2 L175.8 177.7 M188.8 187.7 L184.1 166.4 M198.8 185.1 L196.4 173.8 M208.7 182.6 L208.0 179.4 M265.4 168.2 L264.9 165.0 M274.4 165.9 L273.0 156.7 M283.4 163.7 L281.0 148.1 M292.2 161.4 L291.0 153.1 M300.9 159.2 L300.6 156.8 M351.2 146.5 L350.9 143.0 M359.2 144.4 L358.3 134.6 M367.2 142.4 L365.7 125.6 M375.1 140.4 L374.3 131.5 M382.8 138.4 L382.6 135.9 M427.7 127.0 L427.6 123.7 M434.9 125.2 L434.5 115.9 M442.0 123.4 L441.5 107.6 M449.1 121.6 L448.8 113.2 M456.0 119.9 L456.0 117.4 M496.3 109.6 L496.4 105.9 M502.8 108.0 L502.9 97.5 M509.2 106.4 L509.5 88.5 M515.6 104.7 L515.8 95.2 M521.8 103.1 L521.9 100.4 M558.2 93.9 L558.4 90.2 M564.1 92.4 L564.7 81.9 M569.9 91.0 L570.9 73.1 M575.7 89.5 L576.2 80.0 M581.3 88.0 L581.5 85.3 M619.7 78.3 L619.9 75.7 M625.0 77.0 L625.7 69.1" stroke="#960e0e" stroke-width="0.9" fill="none"/>
<path d="M83.8 251.2 L104.7 245.5 L108.2 253.9 L86.9 259.8Z" fill="none" stroke="#fff" stroke-width="1.2"/>
<path d="M199.6 219.3 L217.7 214.3 L222.9 221.6 L204.5 226.8Z" fill="none" stroke="#fff" stroke-width="1.2"/>
<path d="M300.4 191.5 L316.3 187.1 L322.7 193.5 L306.7 198.0Z" fill="none" stroke="#fff" stroke-width="1.2"/>
<path d="M389.1 167.0 L403.1 163.2 L410.4 168.8 L396.2 172.8Z" fill="none" stroke="#fff" stroke-width="1.2"/>
<path d="M467.5 145.4 L480.0 142.0 L488.0 147.0 L475.4 150.5Z" fill="none" stroke="#fff" stroke-width="1.2"/>
<path d="M537.5 126.1 L548.7 123.0 L557.2 127.5 L545.9 130.7Z" fill="none" stroke="#fff" stroke-width="1.2"/>
<path d="M600.3 108.8 L610.4 106.0 L619.2 110.0 L609.1 112.9Z" fill="none" stroke="#fff" stroke-width="1.2"/>
<path d="M657.0 93.1 L666.1 90.6 L675.2 94.3 L666.1 96.9Z" fill="none" stroke="#fff" stroke-width="1.2"/>
<path d="M96.0 252.7 L103.7 250.5 L111.3 248.4 L118.9 246.3 L126.4 244.2 L133.8 242.1 L141.2 240.1 L148.5 238.1 L155.7 236.0 L162.9 234.0 L170.0 232.1 L177.0 230.1 L184.0 228.2 L190.9 226.2 L197.8 224.3 L204.5 222.4 L211.3 220.5 L218.0 218.7 L224.6 216.8 L231.1 215.0 L237.7 213.2 L244.1 211.4 L250.5 209.6 L256.8 207.9 L263.1 206.1 L269.4 204.4 L275.6 202.6 L281.7 200.9 L287.8 199.2 L293.8 197.5 L299.8 195.9 L305.8 194.2 L311.6 192.6 L317.5 191.0 L323.3 189.3 L329.0 187.7 L334.7 186.1 L340.4 184.6 L346.0 183.0 L351.6 181.5 L357.1 179.9 L362.6 178.4 L368.0 176.9 L373.4 175.4 L378.8 173.9 L384.1 172.4 L389.4 170.9 L394.6 169.5 L399.8 168.0 L405.0 166.6 L410.1 165.2 L415.2 163.7 L420.2 162.3 L425.2 160.9 L430.2 159.6 L435.1 158.2 L440.0 156.8 L444.8 155.5 L449.7 154.1 L454.4 152.8 L459.2 151.5 L463.9 150.2 L468.6 148.8 L473.2 147.6 L477.9 146.3 L482.4 145.0 L487.0 143.7 L491.5 142.5 L496.0 141.2 L500.5 140.0 L504.9 138.7 L509.3 137.5 L513.6 136.3 L518.0 135.1 L522.3 133.9 L526.5 132.7 L530.8 131.5 L535.0 130.3 L539.2 129.2 L543.3 128.0 L547.5 126.9 L551.6 125.7 L555.6 124.6 L559.7 123.5 L563.7 122.3 L567.7 121.2 L571.6 120.1 L575.6 119.0 L579.5 117.9 L583.4 116.9 L587.2 115.8 L591.1 114.7 L594.9 113.7 L598.7 112.6 L602.4 111.5 L606.2 110.5 L609.9 109.5 L613.6 108.4 L617.3 107.4 L620.9 106.4 L624.5 105.4 L628.1 104.4 L631.7 103.4 L635.2 102.4 L638.8 101.4 L642.3 100.4 L645.8 99.5 L649.2 98.5 L652.7 97.6 L656.1 96.6 L659.5 95.7 L662.9 94.7 L666.2 93.8 L666.2 93.8 L662.7 96.0 L658.7 101.9 L654.9 106.5 L651.3 109.4 L647.9 110.0 L644.8 108.1 L642.0 102.8 L638.8 101.4 L635.1 103.7 L631.0 109.7 L627.1 114.3 L623.4 117.3 L619.8 118.0 L616.5 116.1 L613.4 110.8 L609.9 109.5 L606.2 110.5 L602.3 113.5 L598.2 118.5 L594.2 123.0 L590.2 127.1 L586.2 130.7 L582.2 133.6 L578.3 135.7 L574.4 137.1 L570.6 137.5 L566.8 137.0 L563.0 135.4 L559.2 132.6 L555.4 128.2 L551.6 125.7 L547.5 126.9 L543.3 128.0 L539.1 130.5 L534.9 134.3 L530.6 137.8 L526.3 141.0 L522.0 143.9 L517.7 146.3 L513.4 148.2 L509.1 149.6 L504.7 150.4 L500.3 150.5 L495.9 149.9 L491.5 148.6 L487.0 146.2 L482.4 145.0 L477.9 146.3 L473.2 147.6 L468.6 150.1 L464.0 154.1 L459.3 157.8 L454.6 161.1 L449.9 164.1 L445.2 166.7 L440.4 168.8 L435.5 170.3 L430.6 171.2 L425.7 171.5 L420.6 171.1 L415.5 169.9 L410.2 167.6 L405.0 166.6 L399.8 168.0 L394.6 169.5 L389.5 172.4 L384.4 177.0 L379.4 181.2 L374.2 185.0 L369.0 188.5 L363.8 191.4 L358.4 193.8 L353.0 195.5 L347.4 196.6 L341.7 196.8 L335.9 196.3 L329.9 194.9 L323.6 192.2 L317.5 191.0 L311.6 192.6 L305.8 194.2 L300.3 199.0 L295.2 207.3 L290.1 214.7 L284.9 221.3 L279.5 227.0 L273.9 231.7 L268.1 235.2 L262.0 237.4 L255.6 238.1 L248.9 237.2 L241.7 234.6 L234.1 230.1 L225.8 222.9 L218.0 218.7 L211.3 220.5 L207.5 236.1 L201.1 239.3 L194.9 243.7 L188.6 247.8 L182.2 251.7 L175.6 255.2 L169.0 258.4 L162.1 261.1 L155.1 263.3 L147.9 265.0 L140.4 266.1 L132.7 266.5 L124.6 266.2 L116.2 264.9 L108.0 264.8 L100.4 267.0Z" fill="#e63a3a" stroke="#960e0e" stroke-width="0.8" stroke-linejoin="round"/>
<path d="M96.0 252.7 L103.7 250.5 L111.3 248.4 L118.9 246.3 L126.4 244.2 L133.8 242.1 L141.2 240.1 L148.5 238.1 L155.7 236.0 L162.9 234.0 L170.0 232.1 L177.0 230.1 L184.0 228.2 L190.9 226.2 L197.8 224.3 L204.5 222.4 L211.3 220.5 L218.0 218.7 L224.6 216.8 L231.1 215.0 L237.7 213.2 L244.1 211.4 L250.5 209.6 L256.8 207.9 L263.1 206.1 L269.4 204.4 L275.6 202.6 L281.7 200.9 L287.8 199.2 L293.8 197.5 L299.8 195.9 L305.8 194.2 L311.6 192.6 L317.5 191.0 L323.3 189.3 L329.0 187.7 L334.7 186.1 L340.4 184.6 L346.0 183.0 L351.6 181.5 L357.1 179.9 L362.6 178.4 L368.0 176.9 L373.4 175.4 L378.8 173.9 L384.1 172.4 L389.4 170.9 L394.6 169.5 L399.8 168.0 L405.0 166.6 L410.1 165.2 L415.2 163.7 L420.2 162.3 L425.2 160.9 L430.2 159.6 L435.1 158.2 L440.0 156.8 L444.8 155.5 L449.7 154.1 L454.4 152.8 L459.2 151.5 L463.9 150.2 L468.6 148.8 L473.2 147.6 L477.9 146.3 L482.4 145.0 L487.0 143.7 L491.5 142.5 L496.0 141.2 L500.5 140.0 L504.9 138.7 L509.3 137.5 L513.6 136.3 L518.0 135.1 L522.3 133.9 L526.5 132.7 L530.8 131.5 L535.0 130.3 L539.2 129.2 L543.3 128.0 L547.5 126.9 L551.6 125.7 L555.6 124.6 L559.7 123.5 L563.7 122.3 L567.7 121.2 L571.6 120.1 L575.6 119.0 L579.5 117.9 L583.4 116.9 L587.2 115.8 L591.1 114.7 L594.9 113.7 L598.7 112.6 L602.4 111.5 L606.2 110.5 L609.9 109.5 L613.6 108.4 L617.3 107.4 L620.9 106.4 L624.5 105.4 L628.1 104.4 L631.7 103.4 L635.2 102.4 L638.8 101.4 L642.3 100.4 L645.8 99.5 L649.2 98.5 L652.7 97.6 L656.1 96.6 L659.5 95.7 L662.9 94.7 L666.2 93.8 L666.2 93.8 L662.7 96.0 L658.7 101.9 L654.9 106.5 L651.3 109.4 L647.9 110.0 L644.8 108.1 L642.0 102.8 L638.8 101.4 L635.1 103.7 L631.0 109.7 L627.1 114.3 L623.4 117.3 L619.8 118.0 L616.5 116.1 L613.4 110.8 L609.9 109.5 L606.2 110.5 L602.3 113.5 L598.2 118.5 L594.2 123.0 L590.2 127.1 L586.2 130.7 L582.2 133.6 L578.3 135.7 L574.4 137.1 L570.6 137.5 L566.8 137.0 L563.0 135.4 L559.2 132.6 L555.4 128.2 L551.6 125.7 L547.5 126.9 L543.3 128.0 L539.1 130.5 L534.9 134.3 L530.6 137.8 L526.3 141.0 L522.0 143.9 L517.7 146.3 L513.4 148.2 L509.1 149.6 L504.7 150.4 L500.3 150.5 L495.9 149.9 L491.5 148.6 L487.0 146.2 L482.4 145.0 L477.9 146.3 L473.2 147.6 L468.6 150.1 L464.0 154.1 L459.3 157.8 L454.6 161.1 L449.9 164.1 L445.2 166.7 L440.4 168.8 L435.5 170.3 L430.6 171.2 L425.7 171.5 L420.6 171.1 L415.5 169.9 L410.2 167.6 L405.0 166.6 L399.8 168.0 L394.6 169.5 L389.5 172.4 L384.4 177.0 L379.4 181.2 L374.2 185.0 L369.0 188.5 L363.8 191.4 L358.4 193.8 L353.0 195.5 L347.4 196.6 L341.7 196.8 L335.9 196.3 L329.9 194.9 L323.6 192.2 L317.5 191.0 L311.6 192.6 L305.8 194.2 L300.3 199.0 L295.2 207.3 L290.1 214.7 L284.9 221.3 L279.5 227.0 L273.9 231.7 L268.1 235.2 L262.0 237.4 L255.6 238.1 L248.9 237.2 L241.7 234.6 L234.1 230.1 L225.8 222.9 L218.0 218.7 L211.3 220.5 L207.5 236.1 L201.1 239.3 L194.9 243.7 L188.6 247.8 L182.2 251.7 L175.6 255.2 L169.0 258.4 L162.1 261.1 L155.1 263.3 L147.9 265.0 L140.4 266.1 L132.7 266.5 L124.6 266.2 L116.2 264.9 L108.0 264.8 L100.4 267.0Z" fill="#b35656" stroke="#960e0e" stroke-width="0.8" stroke-linejoin="round" clip-path="url(#cs)"/>
<path d="M96.0 252.7 L100.4 267.0 M108.3 249.2 L112.5 263.5 M120.4 245.9 L126.3 266.3 M132.3 242.5 L138.9 266.2 M144.1 239.3 L150.8 264.4 M155.7 236.0 L162.1 261.1 M167.1 232.9 L173.0 256.6 M178.4 229.7 L183.5 250.9 M189.5 226.6 L193.6 244.5 M200.5 223.6 L203.5 237.3 M211.3 220.5 L214.2 234.2 M232.4 214.7 L235.7 231.2 M242.8 211.8 L247.5 236.8 M253.0 208.9 L258.2 238.0 M263.1 206.1 L268.1 235.2 M273.1 203.3 L277.2 229.0 M282.9 200.6 L285.9 220.0 M292.6 197.9 L294.2 208.8 M330.2 187.4 L331.1 195.2 M339.3 184.9 L340.6 196.8 M348.2 182.4 L349.7 196.2 M357.1 179.9 L358.4 193.8 M365.9 177.5 L367.0 189.7 M374.5 175.1 L375.3 184.3 M383.0 172.7 L383.4 177.8 M416.2 163.5 L416.5 170.2 M424.2 161.2 L424.7 171.5 M432.1 159.0 L432.6 170.9 M440.0 156.8 L440.4 168.8 M447.7 154.7 L448.0 165.2 M455.4 152.5 L455.6 160.5 M463.0 150.4 L463.0 154.9 M492.4 142.2 L492.4 148.9 M499.6 140.2 L499.5 150.5 M506.6 138.2 L506.5 150.2 M513.6 136.3 L513.4 148.2 M520.5 134.4 L520.3 144.9 M527.4 132.5 L527.2 140.4 M534.1 130.6 L534.0 135.0 M560.5 123.2 L560.0 133.3 M566.9 121.5 L566.0 136.7 M573.2 119.7 L572.1 137.4 M579.5 117.9 L578.3 135.7 M585.7 116.2 L584.6 131.9 M591.8 114.5 L591.0 126.3 M597.9 112.8 L597.4 119.4 M615.8 107.8 L615.2 114.5 M621.6 106.2 L620.5 118.0 M627.4 104.6 L626.4 115.1 M633.1 103.0 L632.7 107.4 M644.4 99.9 L643.6 106.5 M649.9 98.3 L648.6 110.1 M655.4 96.8 L654.2 107.3 M660.8 95.3 L660.3 99.7" stroke="#960e0e" stroke-width="0.7" fill="none" opacity="0.75"/>
<path d="M96.0 252.7 L103.7 250.5 L111.3 248.4 L118.9 246.3 L126.4 244.2 L133.8 242.1 L141.2 240.1 L148.5 238.1 L155.7 236.0 L162.9 234.0 L170.0 232.1 L177.0 230.1 L184.0 228.2 L190.9 226.2 L197.8 224.3 L204.5 222.4 L211.3 220.5 L218.0 218.7 L224.6 216.8 L231.1 215.0 L237.7 213.2 L244.1 211.4 L250.5 209.6 L256.8 207.9 L263.1 206.1 L269.4 204.4 L275.6 202.6 L281.7 200.9 L287.8 199.2 L293.8 197.5 L299.8 195.9 L305.8 194.2 L311.6 192.6 L317.5 191.0 L323.3 189.3 L329.0 187.7 L334.7 186.1 L340.4 184.6 L346.0 183.0 L351.6 181.5 L357.1 179.9 L362.6 178.4 L368.0 176.9 L373.4 175.4 L378.8 173.9 L384.1 172.4 L389.4 170.9 L394.6 169.5 L399.8 168.0 L405.0 166.6 L410.1 165.2 L415.2 163.7 L420.2 162.3 L425.2 160.9 L430.2 159.6 L435.1 158.2 L440.0 156.8 L444.8 155.5 L449.7 154.1 L454.4 152.8 L459.2 151.5 L463.9 150.2 L468.6 148.8 L473.2 147.6 L477.9 146.3 L482.4 145.0 L487.0 143.7 L491.5 142.5 L496.0 141.2 L500.5 140.0 L504.9 138.7 L509.3 137.5 L513.6 136.3 L518.0 135.1 L522.3 133.9 L526.5 132.7 L530.8 131.5 L535.0 130.3 L539.2 129.2 L543.3 128.0 L547.5 126.9 L551.6 125.7 L555.6 124.6 L559.7 123.5 L563.7 122.3 L567.7 121.2 L571.6 120.1 L575.6 119.0 L579.5 117.9 L583.4 116.9 L587.2 115.8 L591.1 114.7 L594.9 113.7 L598.7 112.6 L602.4 111.5 L606.2 110.5 L609.9 109.5 L613.6 108.4 L617.3 107.4 L620.9 106.4 L624.5 105.4 L628.1 104.4 L631.7 103.4 L635.2 102.4 L638.8 101.4 L642.3 100.4 L645.8 99.5 L649.2 98.5 L652.7 97.6 L656.1 96.6 L659.5 95.7 L662.9 94.7 L666.2 93.8 L667.1 86.9 L663.4 90.8 L659.7 94.4 L656.1 96.6 L652.7 97.6 L649.2 98.5 L645.8 98.9 L642.9 95.0 L640.1 88.6 L635.9 96.2 L631.8 102.2 L628.1 104.4 L624.7 103.9 L621.5 100.4 L618.5 93.6 L615.7 85.1 L612.8 76.5 L608.3 86.0 L603.7 95.6 L599.3 104.3 L595.1 110.6 L591.1 114.7 L587.2 115.8 L583.4 116.9 L579.5 117.9 L575.6 119.0 L571.6 120.1 L567.7 121.2 L563.8 120.3 L560.1 115.3 L556.6 105.6 L553.0 93.6 L549.4 81.5 L544.7 94.3 L540.0 107.3 L535.4 119.0 L530.9 127.3 L526.5 132.6 L522.3 133.9 L518.0 135.1 L513.6 136.3 L509.3 137.5 L504.9 138.7 L500.5 140.0 L496.0 139.0 L491.5 133.9 L487.0 123.9 L482.3 111.4 L477.6 98.8 L472.9 112.3 L468.3 126.0 L463.7 138.3 L459.1 147.1 L454.4 152.7 L449.7 154.1 L444.8 155.5 L440.0 156.8 L435.1 158.2 L430.2 159.6 L425.2 160.9 L420.1 160.4 L414.8 156.1 L409.1 147.5 L403.2 136.8 L397.1 125.9 L392.3 134.9 L387.5 144.3 L382.7 153.5 L377.8 162.0 L372.9 168.9 L367.8 174.2 L362.6 178.3 L357.1 179.9 L351.6 181.5 L345.8 181.4 L339.9 180.0 L333.7 177.2 L327.3 172.8 L320.6 167.6 L313.8 162.1 L307.0 156.9 L301.9 166.1 L297.0 175.6 L292.0 184.6 L286.8 192.5 L281.3 198.3 L275.6 202.6 L269.4 204.4 L263.1 206.1 L256.8 207.9 L250.5 209.6 L244.1 211.4 L237.2 210.8 L229.3 205.6 L220.2 195.0 L210.4 181.7 L200.2 168.1 L196.1 183.5 L192.2 199.2 L187.9 213.2 L182.9 223.3 L177.0 230.0 L170.0 232.1 L162.9 234.0 L155.3 234.5 L147.6 234.5 L139.5 233.9 L131.1 232.2 L122.4 229.9 L113.4 227.2 L104.2 224.2 L94.9 221.2 L85.5 218.4Z" fill="#e9e232" stroke="#960e0e" stroke-width="1.25" stroke-linejoin="round"/>
<path d="M200.2 168.1 L196.3 182.9 L203.0 181.2Z" fill="#f0b41a" opacity="0.85"/>
<path d="M307.0 156.9 L302.1 165.7 L307.9 164.2Z" fill="#f0b41a" opacity="0.85"/>
<path d="M397.1 125.9 L392.5 134.5 L397.6 133.2Z" fill="#f0b41a" opacity="0.85"/>
<path d="M477.6 98.8 L473.1 111.7 L477.6 110.6Z" fill="#f0b41a" opacity="0.85"/>
<path d="M549.4 81.5 L544.9 93.8 L548.9 92.8Z" fill="#f0b41a" opacity="0.85"/>
<path d="M612.8 76.5 L608.4 85.6 L612.1 84.7Z" fill="#f0b41a" opacity="0.85"/>
<path d="M96.0 252.7 L85.5 218.4 M108.3 249.2 L100.5 223.0 M120.4 245.9 L115.2 227.8 M132.3 242.5 L129.4 231.8 M144.1 239.3 L142.8 234.2 M189.5 226.6 L187.1 215.9 M200.5 223.6 L193.8 193.0 M211.3 220.5 L200.2 168.1 M221.9 217.6 L216.3 189.9 M232.4 214.7 L230.9 206.9 M282.9 200.6 L282.4 197.2 M292.6 197.9 L290.9 186.3 M302.2 195.2 L298.9 171.8 M311.6 192.6 L307.0 156.9 M321.0 190.0 L317.9 165.5 M330.2 187.4 L328.6 173.8 M339.3 184.9 L338.7 179.5 M374.5 175.1 L373.9 167.7 M383.0 172.7 L381.7 155.3 M391.5 170.3 L389.4 140.6 M399.8 168.0 L397.1 125.9 M408.0 165.7 L406.7 143.4 M416.2 163.5 L415.8 157.1 M463.0 150.4 L462.8 140.7 M470.5 148.3 L470.1 120.6 M477.9 146.3 L477.6 98.8 M485.2 144.2 L485.1 119.1 M492.4 142.2 L492.4 135.1 M534.1 130.6 L534.5 121.3 M540.8 128.7 L541.9 102.2 M547.5 126.9 L549.4 81.5 M554.0 125.0 L555.2 101.0 M560.5 123.2 L560.8 116.4 M597.9 112.8 L598.5 106.0 M603.9 111.1 L605.5 91.8 M609.9 109.5 L612.8 76.5 M615.8 107.8 L617.4 90.3 M621.6 106.2 L622.1 101.2 M633.1 103.0 L633.4 100.3 M638.8 101.4 L640.1 88.6 M644.4 99.9 L644.6 97.9 M660.8 95.3 L661.1 93.0 M666.2 93.8 L667.1 86.9" stroke="#960e0e" stroke-width="0.9" fill="none"/>
<path d="M163.9 253.9 L221.3 237.2 L232.8 254.1 L173.5 272.1Z" fill="none" stroke="#111" stroke-width="1.3"/><path d="M175.9 255.8 L220.5 252.2 M206.9 245.8 L189.4 262.5" stroke="#111" stroke-width="1.1"/>
<path d="M250.5 212.0 L295.3 199.4 L314.6 220.4 L268.1 234.3Z" fill="none" stroke="#111" stroke-width="1.3"/><path d="M261.8 213.5 L302.9 218.8 M283.4 206.6 L281.0 226.1" stroke="#111" stroke-width="1.1"/>
<path d="M630.1 116.6 L653.4 109.8 L695.3 128.1 L671.6 135.6Z" fill="none" stroke="#111" stroke-width="1.3"/><path d="M639.9 117.5 L684.6 126.9 M649.0 114.2 L675.5 130.5" stroke="#111" stroke-width="1.1"/>
<path d="M99.1 293.4 L121.6 286.5 L125.7 296.6 L102.8 303.7Z" fill="none" stroke="#fff" stroke-width="1.2"/>
<path d="M223.5 255.6 L242.8 249.7 L248.9 258.4 L229.3 264.5Z" fill="none" stroke="#fff" stroke-width="1.2"/>
<path d="M330.5 223.1 L347.3 218.0 L354.8 225.5 L337.8 230.7Z" fill="none" stroke="#fff" stroke-width="1.2"/>
<path d="M423.7 194.8 L438.3 190.4 L446.8 196.9 L432.0 201.5Z" fill="none" stroke="#fff" stroke-width="1.2"/>
<path d="M505.5 170.0 L518.4 166.1 L527.6 171.8 L514.5 175.9Z" fill="none" stroke="#fff" stroke-width="1.2"/>
<path d="M577.8 148.0 L589.3 144.5 L599.0 149.6 L587.4 153.2Z" fill="none" stroke="#fff" stroke-width="1.2"/>
<path d="M642.3 128.4 L652.6 125.3 L662.6 129.9 L652.2 133.1Z" fill="none" stroke="#fff" stroke-width="1.2"/>
<path d="M700.1 110.9 L709.4 108.1 L719.6 112.2 L710.3 115.1Z" fill="none" stroke="#fff" stroke-width="1.2"/>
<path d="M360.0 191.5 L375.2 187.1 L382.3 193.3 L367.0 197.8Z" fill="none" stroke="#fff" stroke-width="1.2"/>
<path d="M112.3 294.8 L236.0 256.8 L242.2 288.1 L122.3 327.6Z" fill="#a97171"/>
<path d="M112.3 294.8 L120.6 292.3 L128.8 289.7 L137.0 287.2 L145.1 284.8 L153.1 282.3 L161.0 279.9 L168.8 277.5 L176.6 275.1 L184.3 272.7 L191.9 270.4 L199.4 268.1 L206.9 265.8 L214.3 263.5 L221.6 261.3 L228.8 259.0 L236.0 256.8 L243.1 254.6 L250.2 252.5 L257.2 250.3 L264.1 248.2 L271.0 246.1 L277.8 244.0 L284.5 241.9 L291.2 239.9 L297.8 237.9 L304.4 235.9 L310.9 233.9 L317.3 231.9 L323.7 229.9 L330.0 228.0 L336.3 226.1 L342.5 224.1 L348.7 222.3 L354.8 220.4 L360.8 218.5 L366.8 216.7 L372.8 214.9 L378.7 213.0 L384.5 211.2 L390.3 209.5 L396.1 207.7 L401.8 205.9 L407.5 204.2 L413.1 202.5 L418.7 200.8 L424.2 199.1 L429.6 197.4 L435.1 195.7 L440.5 194.1 L445.8 192.4 L451.1 190.8 L456.4 189.2 L461.6 187.6 L466.8 186.0 L471.9 184.4 L477.0 182.9 L482.0 181.3 L487.1 179.8 L492.0 178.2 L497.0 176.7 L501.9 175.2 L506.7 173.7 L511.5 172.3 L516.3 170.8 L521.1 169.3 L525.8 167.9 L530.5 166.5 L535.1 165.0 L539.7 163.6 L544.3 162.2 L548.8 160.8 L553.3 159.4 L557.8 158.1 L562.2 156.7 L566.6 155.3 L571.0 154.0 L575.4 152.7 L579.7 151.3 L584.0 150.0 L588.2 148.7 L592.4 147.4 L596.6 146.1 L600.8 144.9 L604.9 143.6 L609.0 142.3 L613.1 141.1 L617.1 139.9 L621.1 138.6 L625.1 137.4 L629.1 136.2 L633.0 135.0 L636.9 133.8 L640.8 132.6 L644.6 131.4 L648.4 130.2 L652.2 129.1 L656.0 127.9 L659.7 126.8 L663.5 125.6 L667.2 124.5 L670.8 123.4 L674.5 122.2 L678.1 121.1 L678.8 120.9 L681.7 120.0 L685.3 118.9 L688.8 117.8 L692.3 116.8 L695.8 115.7 L699.3 114.6 L702.8 113.6 L706.2 112.5 L709.6 111.5 L708.4 119.1 L705.0 120.3 L701.4 122.7 L697.8 124.8 L694.2 126.5 L690.7 127.7 L687.3 128.4 L683.9 128.5 L680.6 127.8 L677.8 128.7 L678.1 121.1 L674.5 122.2 L670.8 123.4 L667.2 124.5 L663.5 125.6 L659.7 126.8 L656.0 127.9 L652.2 129.1 L648.4 130.2 L644.4 132.9 L640.3 137.2 L636.1 141.1 L632.0 144.6 L627.9 147.8 L623.8 150.4 L619.8 152.5 L615.8 153.9 L611.8 154.6 L607.9 154.6 L604.0 153.7 L600.2 152.0 L596.4 149.0 L592.4 147.4 L588.2 148.7 L584.0 150.0 L579.6 153.0 L575.0 157.6 L570.5 161.8 L566.0 165.7 L561.6 169.1 L557.1 172.0 L552.6 174.3 L548.1 175.9 L543.7 176.8 L539.2 176.8 L534.7 175.9 L530.2 174.1 L525.7 170.9 L521.1 169.3 L516.3 170.8 L511.5 172.3 L506.7 175.8 L501.8 181.5 L496.9 186.7 L492.0 191.4 L487.0 195.5 L482.1 199.0 L477.1 201.7 L472.1 203.5 L467.0 204.4 L461.9 204.3 L456.7 203.0 L451.4 200.5 L445.9 196.3 L440.5 194.1 L435.1 195.7 L429.6 197.4 L424.2 199.1 L418.7 200.8 L413.1 202.5 L407.5 204.2 L401.8 205.9 L396.1 207.7 L390.3 209.5 L384.5 211.2 L378.7 213.0 L372.8 214.9 L366.8 216.7 L360.8 218.5 L354.8 220.4 L348.7 222.3 L342.5 224.1 L336.3 226.1 L330.4 231.4 L325.0 240.3 L319.5 248.4 L313.8 255.6 L308.0 261.9 L302.1 267.1 L295.9 271.0 L289.5 273.5 L282.7 274.5 L275.6 273.7 L268.1 271.1 L260.1 266.5 L251.4 258.9 L243.1 254.6 L237.0 261.7 L229.8 263.9 L222.6 266.1 L215.3 268.4 L207.9 270.7 L200.5 273.0 L193.0 275.3 L185.4 277.7 L177.8 280.0 L170.1 282.4 L162.3 284.8 L154.4 287.3 L146.4 289.8 L138.4 292.3 L130.3 294.8 L122.1 297.3 L113.8 299.9Z" fill="#e63a3a" stroke="#960e0e" stroke-width="0.8" stroke-linejoin="round"/>
<path d="M112.3 294.8 L120.6 292.3 L128.8 289.7 L137.0 287.2 L145.1 284.8 L153.1 282.3 L161.0 279.9 L168.8 277.5 L176.6 275.1 L184.3 272.7 L191.9 270.4 L199.4 268.1 L206.9 265.8 L214.3 263.5 L221.6 261.3 L228.8 259.0 L236.0 256.8 L243.1 254.6 L250.2 252.5 L257.2 250.3 L264.1 248.2 L271.0 246.1 L277.8 244.0 L284.5 241.9 L291.2 239.9 L297.8 237.9 L304.4 235.9 L310.9 233.9 L317.3 231.9 L323.7 229.9 L330.0 228.0 L336.3 226.1 L342.5 224.1 L348.7 222.3 L354.8 220.4 L360.8 218.5 L366.8 216.7 L372.8 214.9 L378.7 213.0 L384.5 211.2 L390.3 209.5 L396.1 207.7 L401.8 205.9 L407.5 204.2 L413.1 202.5 L418.7 200.8 L424.2 199.1 L429.6 197.4 L435.1 195.7 L440.5 194.1 L445.8 192.4 L451.1 190.8 L456.4 189.2 L461.6 187.6 L466.8 186.0 L471.9 184.4 L477.0 182.9 L482.0 181.3 L487.1 179.8 L492.0 178.2 L497.0 176.7 L501.9 175.2 L506.7 173.7 L511.5 172.3 L516.3 170.8 L521.1 169.3 L525.8 167.9 L530.5 166.5 L535.1 165.0 L539.7 163.6 L544.3 162.2 L548.8 160.8 L553.3 159.4 L557.8 158.1 L562.2 156.7 L566.6 155.3 L571.0 154.0 L575.4 152.7 L579.7 151.3 L584.0 150.0 L588.2 148.7 L592.4 147.4 L596.6 146.1 L600.8 144.9 L604.9 143.6 L609.0 142.3 L613.1 141.1 L617.1 139.9 L621.1 138.6 L625.1 137.4 L629.1 136.2 L633.0 135.0 L636.9 133.8 L640.8 132.6 L644.6 131.4 L648.4 130.2 L652.2 129.1 L656.0 127.9 L659.7 126.8 L663.5 125.6 L667.2 124.5 L670.8 123.4 L674.5 122.2 L678.1 121.1 L678.8 120.9 L681.7 120.0 L685.3 118.9 L688.8 117.8 L692.3 116.8 L695.8 115.7 L699.3 114.6 L702.8 113.6 L706.2 112.5 L709.6 111.5 L708.4 119.1 L705.0 120.3 L701.4 122.7 L697.8 124.8 L694.2 126.5 L690.7 127.7 L687.3 128.4 L683.9 128.5 L680.6 127.8 L677.8 128.7 L678.1 121.1 L674.5 122.2 L670.8 123.4 L667.2 124.5 L663.5 125.6 L659.7 126.8 L656.0 127.9 L652.2 129.1 L648.4 130.2 L644.4 132.9 L640.3 137.2 L636.1 141.1 L632.0 144.6 L627.9 147.8 L623.8 150.4 L619.8 152.5 L615.8 153.9 L611.8 154.6 L607.9 154.6 L604.0 153.7 L600.2 152.0 L596.4 149.0 L592.4 147.4 L588.2 148.7 L584.0 150.0 L579.6 153.0 L575.0 157.6 L570.5 161.8 L566.0 165.7 L561.6 169.1 L557.1 172.0 L552.6 174.3 L548.1 175.9 L543.7 176.8 L539.2 176.8 L534.7 175.9 L530.2 174.1 L525.7 170.9 L521.1 169.3 L516.3 170.8 L511.5 172.3 L506.7 175.8 L501.8 181.5 L496.9 186.7 L492.0 191.4 L487.0 195.5 L482.1 199.0 L477.1 201.7 L472.1 203.5 L467.0 204.4 L461.9 204.3 L456.7 203.0 L451.4 200.5 L445.9 196.3 L440.5 194.1 L435.1 195.7 L429.6 197.4 L424.2 199.1 L418.7 200.8 L413.1 202.5 L407.5 204.2 L401.8 205.9 L396.1 207.7 L390.3 209.5 L384.5 211.2 L378.7 213.0 L372.8 214.9 L366.8 216.7 L360.8 218.5 L354.8 220.4 L348.7 222.3 L342.5 224.1 L336.3 226.1 L330.4 231.4 L325.0 240.3 L319.5 248.4 L313.8 255.6 L308.0 261.9 L302.1 267.1 L295.9 271.0 L289.5 273.5 L282.7 274.5 L275.6 273.7 L268.1 271.1 L260.1 266.5 L251.4 258.9 L243.1 254.6 L237.0 261.7 L229.8 263.9 L222.6 266.1 L215.3 268.4 L207.9 270.7 L200.5 273.0 L193.0 275.3 L185.4 277.7 L177.8 280.0 L170.1 282.4 L162.3 284.8 L154.4 287.3 L146.4 289.8 L138.4 292.3 L130.3 294.8 L122.1 297.3 L113.8 299.9Z" fill="#b35656" stroke="#960e0e" stroke-width="0.8" stroke-linejoin="round" clip-path="url(#cs)"/>
<path d="M112.3 294.8 L113.8 299.9 M125.6 290.7 L127.0 295.8 M138.6 286.7 L140.0 291.7 M151.5 282.8 L152.8 287.8 M164.1 278.9 L165.4 283.9 M176.6 275.1 L177.8 280.0 M188.8 271.3 L190.0 276.2 M200.9 267.6 L202.0 272.5 M212.8 264.0 L213.8 268.8 M224.5 260.4 L225.5 265.2 M236.0 256.8 L237.0 261.7 M258.6 249.9 L261.7 267.6 M269.6 246.5 L274.2 273.3 M280.5 243.2 L285.5 274.3 M291.2 239.9 L295.9 271.0 M301.7 236.7 L305.7 264.1 M312.1 233.5 L315.0 254.3 M322.4 230.3 L323.9 242.0 M452.2 190.5 L452.4 201.1 M460.5 187.9 L460.9 204.1 M468.8 185.4 L469.1 204.2 M477.0 182.9 L477.1 201.7 M485.1 180.4 L485.1 197.0 M493.0 177.9 L493.0 190.5 M500.9 175.5 L500.8 182.6 M531.4 166.2 L531.1 174.6 M538.8 163.9 L538.3 176.7 M546.1 161.6 L545.5 176.5 M553.3 159.4 L552.6 174.3 M560.5 157.2 L559.8 170.4 M567.5 155.1 L566.9 165.0 M574.5 152.9 L574.1 158.5 M601.6 144.6 L600.9 152.4 M608.2 142.6 L607.1 154.5 M614.7 140.6 L613.4 154.4 M621.1 138.6 L619.8 152.5 M627.5 136.7 L626.2 148.9 M633.8 134.7 L632.8 144.0 M640.0 132.8 L639.4 138.0 M681.7 120.0 L680.6 127.8 M687.4 118.3 L685.9 128.6 M693.0 116.5 L691.4 127.5 M698.6 114.8 L697.1 125.1 M704.2 113.1 L702.8 121.8 M709.6 111.5 L708.4 119.1" stroke="#960e0e" stroke-width="0.7" fill="none" opacity="0.75"/>
<path d="M112.3 294.8 L120.6 292.3 L128.8 289.7 L137.0 287.2 L145.1 284.8 L153.1 282.3 L161.0 279.9 L168.8 277.5 L176.6 275.1 L184.3 272.7 L191.9 270.4 L199.4 268.1 L206.9 265.8 L214.3 263.5 L221.6 261.3 L228.8 259.0 L236.0 256.8 L243.1 254.6 L250.2 252.5 L257.2 250.3 L264.1 248.2 L271.0 246.1 L277.8 244.0 L284.5 241.9 L291.2 239.9 L297.8 237.9 L304.4 235.9 L310.9 233.9 L317.3 231.9 L323.7 229.9 L330.0 228.0 L336.3 226.1 L342.5 224.1 L348.7 222.3 L354.8 220.4 L360.8 218.5 L366.8 216.7 L372.8 214.9 L378.7 213.0 L384.5 211.2 L390.3 209.5 L396.1 207.7 L401.8 205.9 L407.5 204.2 L413.1 202.5 L418.7 200.8 L424.2 199.1 L429.6 197.4 L435.1 195.7 L440.5 194.1 L445.8 192.4 L451.1 190.8 L456.4 189.2 L461.6 187.6 L466.8 186.0 L471.9 184.4 L477.0 182.9 L482.0 181.3 L487.1 179.8 L492.0 178.2 L497.0 176.7 L501.9 175.2 L506.7 173.7 L511.5 172.3 L516.3 170.8 L521.1 169.3 L525.8 167.9 L530.5 166.5 L535.1 165.0 L539.7 163.6 L544.3 162.2 L548.8 160.8 L553.3 159.4 L557.8 158.1 L562.2 156.7 L566.6 155.3 L571.0 154.0 L575.4 152.7 L579.7 151.3 L584.0 150.0 L588.2 148.7 L592.4 147.4 L596.6 146.1 L600.8 144.9 L604.9 143.6 L609.0 142.3 L613.1 141.1 L617.1 139.9 L621.1 138.6 L625.1 137.4 L629.1 136.2 L633.0 135.0 L636.9 133.8 L640.8 132.6 L644.6 131.4 L648.4 130.2 L652.2 129.1 L656.0 127.9 L659.7 126.8 L663.5 125.6 L667.2 124.5 L670.8 123.4 L674.5 122.2 L678.1 121.1 L678.8 120.9 L681.7 120.0 L685.3 118.9 L688.8 117.8 L692.3 116.8 L695.8 115.7 L699.3 114.6 L702.8 113.6 L706.2 112.5 L709.6 111.5 L713.2 88.9 L708.2 99.6 L703.4 109.3 L699.3 114.6 L695.8 115.7 L692.3 116.8 L688.8 117.8 L685.3 118.9 L682.0 117.5 L679.6 115.1 L678.8 116.3 L674.6 121.7 L670.8 123.4 L667.2 124.5 L663.9 122.4 L661.4 113.4 L659.5 98.7 L657.7 82.9 L652.0 99.1 L646.5 114.8 L641.4 126.7 L636.9 133.7 L633.0 135.0 L629.1 136.2 L625.1 137.4 L621.1 138.6 L617.1 139.9 L613.1 141.1 L609.0 142.3 L605.1 141.7 L601.4 137.4 L598.0 128.9 L594.7 118.3 L591.2 107.6 L586.1 119.5 L581.0 131.5 L576.0 142.4 L571.3 150.2 L566.6 155.3 L562.2 156.7 L557.8 158.1 L553.3 159.4 L548.8 160.8 L544.3 162.2 L539.7 163.6 L535.2 162.9 L530.7 158.1 L526.3 148.5 L521.9 136.5 L517.3 124.4 L512.2 137.8 L507.1 151.4 L502.0 163.7 L497.0 172.4 L492.0 178.2 L487.1 179.8 L482.0 181.3 L477.0 182.9 L471.9 184.4 L466.8 186.0 L461.6 187.6 L456.3 187.8 L451.0 185.2 L445.4 179.5 L439.7 172.2 L433.9 164.9 L428.5 171.7 L423.2 178.8 L417.9 185.8 L412.5 192.4 L407.1 198.4 L401.6 202.2 L395.8 202.9 L389.9 203.6 L384.2 206.3 L378.4 209.0 L372.4 210.9 L366.1 209.0 L359.6 205.7 L352.9 201.7 L346.0 197.5 L339.1 193.5 L333.6 203.2 L328.2 213.2 L322.7 222.2 L316.9 229.0 L310.9 233.8 L304.4 235.9 L297.8 237.9 L291.2 239.9 L284.5 241.9 L277.8 244.0 L271.0 246.1 L263.7 245.9 L255.6 241.3 L246.3 231.5 L236.3 219.0 L226.1 206.4 L221.2 221.6 L216.5 237.1 L211.6 251.0 L205.8 261.1 L198.3 263.4 L190.8 265.7 L183.1 268.0 L175.4 270.4 L167.6 272.7 L159.7 275.1 L151.8 277.5 L143.8 280.0 L135.6 282.4 L127.5 284.9 L119.2 287.4 L110.8 290.0Z" fill="#e9e232" stroke="#960e0e" stroke-width="1.25" stroke-linejoin="round"/>
<path d="M226.1 206.4 L221.4 221.0 L228.6 219.0Z" fill="#f0b41a" opacity="0.85"/>
<path d="M339.1 193.5 L333.9 202.8 L339.9 201.1Z" fill="#f0b41a" opacity="0.85"/>
<path d="M433.9 164.9 L428.8 171.4 L434.1 169.9Z" fill="#f0b41a" opacity="0.85"/>
<path d="M517.3 124.4 L512.4 137.3 L517.1 136.0Z" fill="#f0b41a" opacity="0.85"/>
<path d="M591.2 107.6 L586.3 119.0 L590.5 117.8Z" fill="#f0b41a" opacity="0.85"/>
<path d="M657.7 82.9 L652.3 98.4 L656.0 97.4Z" fill="#f0b41a" opacity="0.85"/>
<path d="M112.3 294.8 L110.8 290.0 M125.6 290.7 L124.2 285.9 M138.6 286.7 L137.3 281.9 M151.5 282.8 L150.2 278.0 M164.1 278.9 L162.9 274.2 M176.6 275.1 L175.4 270.4 M188.8 271.3 L187.7 266.6 M200.9 267.6 L199.8 262.9 M212.8 264.0 L210.5 253.7 M224.5 260.4 L218.4 231.0 M236.0 256.8 L226.1 206.4 M247.4 253.3 L242.4 226.8 M258.6 249.9 L257.2 242.4 M322.4 230.3 L321.6 224.0 M332.5 227.2 L330.4 209.2 M342.5 224.1 L339.1 193.5 M352.3 221.1 L350.2 200.0 M362.0 218.2 L360.9 206.4 M371.6 215.2 L371.2 210.6 M381.0 212.3 L380.7 207.9 M390.3 209.5 L389.9 203.6 M399.5 206.6 L399.3 202.5 M408.6 203.9 L408.2 197.4 M417.5 201.1 L416.8 187.2 M426.4 198.4 L425.3 175.9 M435.1 195.7 L433.9 164.9 M443.7 193.1 L443.2 176.7 M452.2 190.5 L452.0 185.8 M500.9 175.5 L501.0 166.0 M508.7 173.1 L509.1 146.1 M516.3 170.8 L517.3 124.4 M523.9 168.5 L524.6 143.9 M531.4 166.2 L531.6 159.2 M574.5 152.9 L575.0 144.5 M581.4 150.8 L583.0 126.8 M588.2 148.7 L591.2 107.6 M594.9 146.7 L596.6 124.9 M601.6 144.6 L602.1 138.4 M640.0 132.8 L640.5 128.5 M646.1 130.9 L648.7 108.8 M652.2 129.1 L657.7 82.9 M658.3 127.2 L660.6 107.9 M664.2 125.4 L664.5 123.3 M675.9 121.8 L676.2 119.9 M681.7 120.0 L682.0 117.5 M704.2 113.1 L705.3 105.8 M709.6 111.5 L713.2 88.9" stroke="#960e0e" stroke-width="0.9" fill="none"/>
<path d="M118.6 347.3 L143.2 339.0 L148.4 351.5 L123.2 360.3Z" fill="none" stroke="#fff" stroke-width="1.2"/>
<path d="M253.6 301.4 L274.3 294.4 L281.8 305.0 L260.7 312.3Z" fill="none" stroke="#fff" stroke-width="1.2"/>
<path d="M368.1 262.5 L385.8 256.5 L394.9 265.5 L376.9 271.8Z" fill="none" stroke="#fff" stroke-width="1.2"/>
<path d="M466.4 229.0 L481.8 223.8 L491.9 231.6 L476.4 237.1Z" fill="none" stroke="#fff" stroke-width="1.2"/>
<path d="M551.8 200.0 L565.2 195.4 L576.1 202.3 L562.6 207.0Z" fill="none" stroke="#fff" stroke-width="1.2"/>
<path d="M626.6 174.6 L638.4 170.5 L649.8 176.6 L637.9 180.7Z" fill="none" stroke="#fff" stroke-width="1.2"/>
<path d="M692.8 152.1 L703.2 148.5 L714.9 153.8 L704.4 157.5Z" fill="none" stroke="#fff" stroke-width="1.2"/>
<path d="M723.0 141.8 L732.9 138.4 L744.7 143.5 L734.7 146.9Z" fill="none" stroke="#fff" stroke-width="1.2"/>
<path d="M394.6 223.0 L410.6 217.9 L419.5 225.6 L403.4 230.9Z" fill="none" stroke="#fff" stroke-width="1.2"/>
<path d="M133.4 349.5 L142.5 346.4 L151.5 343.3 L160.4 340.2 L169.2 337.2 L177.9 334.2 L186.5 331.3 L195.0 328.3 L203.5 325.4 L211.8 322.5 L220.0 319.7 L228.2 316.9 L236.3 314.1 L244.2 311.4 L252.1 308.6 L260.0 305.9 L267.7 303.3 L275.4 300.6 L282.9 298.0 L290.5 295.4 L297.9 292.9 L305.2 290.4 L312.5 287.8 L319.7 285.4 L326.9 282.9 L333.9 280.5 L340.9 278.1 L347.9 275.7 L354.7 273.3 L361.5 271.0 L368.3 268.6 L374.9 266.3 L381.5 264.1 L388.1 261.8 L394.5 259.6 L401.0 257.4 L407.3 255.2 L413.6 253.0 L419.9 250.9 L426.0 248.7 L432.2 246.6 L437.0 244.9 L438.2 244.5 L444.2 242.5 L450.2 240.4 L456.1 238.4 L462.0 236.3 L467.8 234.3 L473.5 232.4 L479.2 230.4 L484.9 228.5 L490.5 226.5 L496.0 224.6 L501.5 222.7 L507.0 220.8 L512.4 219.0 L517.8 217.1 L523.1 215.3 L528.3 213.5 L533.6 211.7 L538.7 209.9 L543.9 208.1 L549.0 206.4 L554.0 204.6 L559.0 202.9 L564.0 201.2 L568.9 199.5 L573.8 197.8 L578.7 196.1 L583.5 194.5 L588.3 192.8 L593.0 191.2 L597.7 189.6 L602.3 188.0 L607.0 186.4 L611.5 184.8 L616.1 183.2 L620.6 181.7 L625.1 180.2 L629.5 178.6 L633.9 177.1 L638.3 175.6 L642.6 174.1 L646.9 172.6 L651.2 171.2 L655.4 169.7 L659.6 168.2 L663.8 166.8 L668.0 165.4 L672.1 164.0 L676.2 162.6 L680.2 161.2 L684.2 159.8 L688.2 158.4 L692.2 157.0 L696.1 155.7 L700.0 154.3 L703.9 153.0 L707.7 151.7 L711.6 150.4 L715.3 149.0 L719.1 147.8 L722.8 146.5 L726.6 145.2 L730.2 143.9 L733.9 142.7 L733.9 142.7 L730.2 143.9 L726.6 145.2 L722.8 146.5 L719.1 147.8 L715.3 149.0 L711.6 150.4 L707.7 151.7 L703.9 153.0 L700.0 154.3 L695.8 158.0 L691.1 164.2 L686.5 169.8 L682.1 174.8 L677.6 179.2 L673.3 182.8 L669.1 185.5 L665.0 187.2 L661.1 187.9 L657.2 187.3 L653.5 185.5 L649.9 182.3 L646.4 177.1 L642.6 174.1 L638.3 175.6 L633.9 177.1 L629.3 180.4 L624.5 185.7 L619.7 190.6 L615.0 195.0 L610.2 198.9 L605.5 202.2 L600.9 204.8 L596.3 206.7 L591.7 207.7 L587.1 207.7 L582.6 206.8 L578.1 204.8 L573.6 201.3 L568.9 199.5 L564.0 201.2 L559.0 202.9 L553.9 206.5 L548.7 212.0 L543.5 217.0 L538.3 221.7 L533.1 225.8 L527.8 229.3 L522.6 232.2 L517.3 234.3 L512.1 235.5 L506.7 235.8 L501.4 235.1 L496.0 233.3 L490.5 230.0 L484.9 228.5 L479.2 230.4 L473.5 232.4 L467.8 234.3 L462.0 236.3 L456.1 238.4 L450.2 240.4 L444.2 242.5 L438.2 244.5 L437.0 244.9 L432.2 246.6 L426.2 252.2 L420.2 257.3 L414.1 261.4 L407.9 264.3 L401.5 265.8 L395.0 265.5 L388.1 263.0 L381.5 264.1 L374.9 266.3 L368.6 271.8 L362.5 280.7 L356.4 288.9 L350.1 296.2 L343.8 302.6 L337.3 308.0 L330.6 312.3 L323.7 315.1 L316.6 316.6 L309.1 316.4 L301.2 314.5 L292.9 310.7 L284.0 304.1 L275.4 300.6 L267.7 303.3 L262.1 317.6 L254.6 321.5 L247.3 326.9 L239.9 331.9 L232.4 336.7 L224.8 341.1 L217.0 345.2 L209.0 348.8 L200.8 351.9 L192.3 354.4 L183.7 356.3 L174.7 357.6 L165.4 358.2 L155.6 357.7 L146.1 358.5 L137.1 361.7Z" fill="#e63a3a" stroke="#960e0e" stroke-width="0.8" stroke-linejoin="round"/>
<path d="M133.4 349.5 L142.5 346.4 L151.5 343.3 L160.4 340.2 L169.2 337.2 L177.9 334.2 L186.5 331.3 L195.0 328.3 L203.5 325.4 L211.8 322.5 L220.0 319.7 L228.2 316.9 L236.3 314.1 L244.2 311.4 L252.1 308.6 L260.0 305.9 L267.7 303.3 L275.4 300.6 L282.9 298.0 L290.5 295.4 L297.9 292.9 L305.2 290.4 L312.5 287.8 L319.7 285.4 L326.9 282.9 L333.9 280.5 L340.9 278.1 L347.9 275.7 L354.7 273.3 L361.5 271.0 L368.3 268.6 L374.9 266.3 L381.5 264.1 L388.1 261.8 L394.5 259.6 L401.0 257.4 L407.3 255.2 L413.6 253.0 L419.9 250.9 L426.0 248.7 L432.2 246.6 L437.0 244.9 L438.2 244.5 L444.2 242.5 L450.2 240.4 L456.1 238.4 L462.0 236.3 L467.8 234.3 L473.5 232.4 L479.2 230.4 L484.9 228.5 L490.5 226.5 L496.0 224.6 L501.5 222.7 L507.0 220.8 L512.4 219.0 L517.8 217.1 L523.1 215.3 L528.3 213.5 L533.6 211.7 L538.7 209.9 L543.9 208.1 L549.0 206.4 L554.0 204.6 L559.0 202.9 L564.0 201.2 L568.9 199.5 L573.8 197.8 L578.7 196.1 L583.5 194.5 L588.3 192.8 L593.0 191.2 L597.7 189.6 L602.3 188.0 L607.0 186.4 L611.5 184.8 L616.1 183.2 L620.6 181.7 L625.1 180.2 L629.5 178.6 L633.9 177.1 L638.3 175.6 L642.6 174.1 L646.9 172.6 L651.2 171.2 L655.4 169.7 L659.6 168.2 L663.8 166.8 L668.0 165.4 L672.1 164.0 L676.2 162.6 L680.2 161.2 L684.2 159.8 L688.2 158.4 L692.2 157.0 L696.1 155.7 L700.0 154.3 L703.9 153.0 L707.7 151.7 L711.6 150.4 L715.3 149.0 L719.1 147.8 L722.8 146.5 L726.6 145.2 L730.2 143.9 L733.9 142.7 L733.9 142.7 L730.2 143.9 L726.6 145.2 L722.8 146.5 L719.1 147.8 L715.3 149.0 L711.6 150.4 L707.7 151.7 L703.9 153.0 L700.0 154.3 L695.8 158.0 L691.1 164.2 L686.5 169.8 L682.1 174.8 L677.6 179.2 L673.3 182.8 L669.1 185.5 L665.0 187.2 L661.1 187.9 L657.2 187.3 L653.5 185.5 L649.9 182.3 L646.4 177.1 L642.6 174.1 L638.3 175.6 L633.9 177.1 L629.3 180.4 L624.5 185.7 L619.7 190.6 L615.0 195.0 L610.2 198.9 L605.5 202.2 L600.9 204.8 L596.3 206.7 L591.7 207.7 L587.1 207.7 L582.6 206.8 L578.1 204.8 L573.6 201.3 L568.9 199.5 L564.0 201.2 L559.0 202.9 L553.9 206.5 L548.7 212.0 L543.5 217.0 L538.3 221.7 L533.1 225.8 L527.8 229.3 L522.6 232.2 L517.3 234.3 L512.1 235.5 L506.7 235.8 L501.4 235.1 L496.0 233.3 L490.5 230.0 L484.9 228.5 L479.2 230.4 L473.5 232.4 L467.8 234.3 L462.0 236.3 L456.1 238.4 L450.2 240.4 L444.2 242.5 L438.2 244.5 L437.0 244.9 L432.2 246.6 L426.2 252.2 L420.2 257.3 L414.1 261.4 L407.9 264.3 L401.5 265.8 L395.0 265.5 L388.1 263.0 L381.5 264.1 L374.9 266.3 L368.6 271.8 L362.5 280.7 L356.4 288.9 L350.1 296.2 L343.8 302.6 L337.3 308.0 L330.6 312.3 L323.7 315.1 L316.6 316.6 L309.1 316.4 L301.2 314.5 L292.9 310.7 L284.0 304.1 L275.4 300.6 L267.7 303.3 L262.1 317.6 L254.6 321.5 L247.3 326.9 L239.9 331.9 L232.4 336.7 L224.8 341.1 L217.0 345.2 L209.0 348.8 L200.8 351.9 L192.3 354.4 L183.7 356.3 L174.7 357.6 L165.4 358.2 L155.6 357.7 L146.1 358.5 L137.1 361.7Z" fill="#b35656" stroke="#960e0e" stroke-width="0.8" stroke-linejoin="round" clip-path="url(#cs)"/>
<path d="M133.4 349.5 L137.1 361.7 M147.9 344.5 L151.4 356.6 M162.2 339.6 L167.3 358.1 M176.2 334.8 L181.9 356.7 M189.9 330.1 L195.7 353.5 M203.5 325.4 L209.0 348.8 M216.7 320.8 L221.7 342.8 M229.8 316.3 L233.9 335.7 M242.7 311.9 L245.9 327.9 M255.3 307.6 L257.5 319.2 M267.7 303.3 L269.8 314.9 M291.9 294.9 L294.6 311.6 M303.8 290.9 L307.5 316.1 M315.4 286.8 L319.5 316.2 M326.9 282.9 L330.6 312.3 M338.1 279.0 L341.2 304.9 M349.2 275.2 L351.4 294.8 M360.2 271.4 L361.3 282.4 M392.0 260.5 L392.3 264.9 M402.2 256.9 L402.8 265.6 M412.4 253.4 L412.9 262.1 M422.3 250.0 L422.6 255.3 M497.1 224.2 L497.1 233.8 M505.9 221.2 L505.7 235.7 M514.5 218.2 L514.2 235.1 M523.1 215.3 L522.6 232.2 M531.5 212.4 L531.0 227.3 M539.8 209.5 L539.3 220.8 M548.0 206.7 L547.7 213.0 M579.6 195.8 L579.0 205.3 M587.3 193.2 L586.2 207.6 M594.9 190.6 L593.5 207.4 M602.3 188.0 L600.9 204.8 M609.7 185.4 L608.3 200.3 M617.0 182.9 L615.9 194.1 M624.2 180.5 L623.5 186.7 M652.1 170.9 L650.6 183.0 M658.8 168.5 L656.5 187.1 M665.5 166.2 L662.6 187.8 M672.1 164.0 L669.1 185.5 M678.6 161.7 L675.9 180.7 M685.0 159.5 L682.9 173.9 M691.4 157.3 L690.2 165.4" stroke="#960e0e" stroke-width="0.7" fill="none" opacity="0.75"/>
<path d="M133.4 349.5 L142.5 346.4 L151.5 343.3 L160.4 340.2 L169.2 337.2 L177.9 334.2 L186.5 331.3 L195.0 328.3 L203.5 325.4 L211.8 322.5 L220.0 319.7 L228.2 316.9 L236.3 314.1 L244.2 311.4 L252.1 308.6 L260.0 305.9 L267.7 303.3 L275.4 300.6 L282.9 298.0 L290.5 295.4 L297.9 292.9 L305.2 290.4 L312.5 287.8 L319.7 285.4 L326.9 282.9 L333.9 280.5 L340.9 278.1 L347.9 275.7 L354.7 273.3 L361.5 271.0 L368.3 268.6 L374.9 266.3 L381.5 264.1 L388.1 261.8 L394.5 259.6 L401.0 257.4 L407.3 255.2 L413.6 253.0 L419.9 250.9 L426.0 248.7 L432.2 246.6 L437.0 244.9 L438.2 244.5 L444.2 242.5 L450.2 240.4 L456.1 238.4 L462.0 236.3 L467.8 234.3 L473.5 232.4 L479.2 230.4 L484.9 228.5 L490.5 226.5 L496.0 224.6 L501.5 222.7 L507.0 220.8 L512.4 219.0 L517.8 217.1 L523.1 215.3 L528.3 213.5 L533.6 211.7 L538.7 209.9 L543.9 208.1 L549.0 206.4 L554.0 204.6 L559.0 202.9 L564.0 201.2 L568.9 199.5 L573.8 197.8 L578.7 196.1 L583.5 194.5 L588.3 192.8 L593.0 191.2 L597.7 189.6 L602.3 188.0 L607.0 186.4 L611.5 184.8 L616.1 183.2 L620.6 181.7 L625.1 180.2 L629.5 178.6 L633.9 177.1 L638.3 175.6 L642.6 174.1 L646.9 172.6 L651.2 171.2 L655.4 169.7 L659.6 168.2 L663.8 166.8 L668.0 165.4 L672.1 164.0 L676.2 162.6 L680.2 161.2 L684.2 159.8 L688.2 158.4 L692.2 157.0 L696.1 155.7 L700.0 154.3 L703.9 153.0 L707.7 151.7 L711.6 150.4 L715.3 149.0 L719.1 147.8 L722.8 146.5 L726.6 145.2 L730.2 143.9 L733.9 142.7 L736.0 131.0 L731.4 137.3 L726.9 143.0 L722.9 146.4 L719.4 146.2 L716.4 142.8 L713.9 135.8 L711.7 127.1 L709.4 118.4 L704.0 128.6 L698.7 139.0 L693.5 148.4 L688.7 155.2 L684.2 159.7 L680.2 161.2 L676.2 162.6 L672.1 164.0 L668.0 165.4 L663.8 166.8 L659.6 168.2 L655.7 167.5 L652.2 162.7 L649.3 152.9 L646.5 140.8 L643.6 128.5 L637.7 142.1 L631.9 156.0 L626.3 168.4 L621.0 177.3 L616.1 183.2 L611.5 184.8 L607.0 186.4 L602.3 188.0 L597.7 189.6 L593.0 191.2 L588.3 192.8 L583.7 192.2 L579.3 187.1 L575.2 176.8 L571.2 163.9 L567.0 150.8 L561.1 165.5 L555.3 180.4 L549.6 193.9 L544.1 203.5 L538.7 209.8 L533.6 211.7 L528.3 213.5 L523.1 215.3 L517.8 217.1 L512.4 219.0 L507.0 220.8 L501.5 220.9 L496.1 217.6 L490.5 210.2 L484.8 200.8 L479.0 191.4 L473.2 203.4 L467.5 215.5 L461.8 226.6 L456.0 234.7 L450.1 236.4 L444.1 236.7 L438.0 237.1 L436.7 237.1 L431.9 239.8 L425.8 243.3 L419.6 246.8 L413.5 250.2 L407.2 253.5 L400.5 251.3 L393.5 245.4 L386.2 237.9 L378.7 230.4 L372.7 241.3 L366.7 252.4 L360.7 262.5 L354.4 270.1 L347.9 275.6 L340.9 278.1 L333.9 280.5 L326.9 282.9 L319.7 285.4 L312.4 286.9 L304.6 285.7 L296.3 282.7 L287.4 276.4 L278.1 268.9 L268.5 260.7 L258.7 252.8 L253.0 268.5 L247.5 284.4 L241.7 298.9 L235.3 309.4 L228.2 316.8 L220.0 319.7 L211.8 322.5 L203.2 324.2 L194.4 325.5 L185.3 326.3 L175.9 326.3 L166.2 325.8 L156.2 325.0 L146.0 324.0 L135.7 322.9 L125.2 322.2Z" fill="#e9e232" stroke="#960e0e" stroke-width="1.25" stroke-linejoin="round"/>
<path d="M258.7 252.8 L253.2 267.8 L260.9 265.4Z" fill="#f0b41a" opacity="0.85"/>
<path d="M378.7 230.4 L372.9 240.8 L379.4 238.7Z" fill="#f0b41a" opacity="0.85"/>
<path d="M479.0 191.4 L473.5 202.9 L479.1 201.1Z" fill="#f0b41a" opacity="0.85"/>
<path d="M567.0 150.8 L561.3 164.9 L566.2 163.3Z" fill="#f0b41a" opacity="0.85"/>
<path d="M643.6 128.5 L638.0 141.6 L642.3 140.2Z" fill="#f0b41a" opacity="0.85"/>
<path d="M709.4 118.4 L704.2 128.2 L708.0 126.9Z" fill="#f0b41a" opacity="0.85"/>
<path d="M133.4 349.5 L125.2 322.2 M147.9 344.5 L141.9 323.5 M162.2 339.6 L158.2 325.2 M176.2 334.8 L173.9 326.2 M189.9 330.1 L188.9 326.0 M242.7 311.9 L240.6 301.6 M255.3 307.6 L249.7 278.2 M267.7 303.3 L258.7 252.8 M279.9 299.1 L274.3 265.6 M291.9 294.9 L289.2 277.7 M303.8 290.9 L302.9 285.1 M360.2 271.4 L359.5 264.5 M370.9 267.7 L369.1 248.0 M381.5 264.1 L378.7 230.4 M392.0 260.5 L390.6 242.6 M402.2 256.9 L401.9 251.9 M412.4 253.4 L412.2 250.9 M422.3 250.0 L422.1 245.4 M432.2 246.6 L431.9 239.8 M441.8 243.3 L441.6 236.8 M451.4 240.0 L451.3 236.4 M460.8 236.8 L460.6 228.7 M470.1 233.6 L469.8 210.7 M479.2 230.4 L479.0 191.4 M488.2 227.3 L488.3 206.6 M497.1 224.2 L497.2 218.4 M548.0 206.7 L548.4 196.4 M556.0 203.9 L557.6 174.6 M564.0 201.2 L567.0 150.8 M571.9 198.5 L573.6 171.9 M579.6 195.8 L580.2 188.3 M624.2 180.5 L625.2 170.8 M631.3 178.0 L634.2 150.5 M638.3 175.6 L643.6 128.5 M645.2 173.2 L648.1 148.3 M652.1 170.9 L652.9 163.8 M691.4 157.3 L692.5 150.2 M697.7 155.1 L700.8 134.9 M703.9 153.0 L709.4 118.4 M710.0 150.9 L713.0 132.5 M716.1 148.8 L717.0 143.6 M728.0 144.7 L728.7 140.9 M733.9 142.7 L736.0 131.0" stroke="#960e0e" stroke-width="0.9" fill="none"/>
<path d="M313.3 295.4 L368.7 276.0 L397.6 307.1 L339.7 329.1Z" fill="none" stroke="#111" stroke-width="1.3"/><path d="M327.2 297.9 L383.0 304.6 M356.2 286.4 L353.6 317.0" stroke="#111" stroke-width="1.1"/>
<path d="M415.8 260.6 L464.9 243.4 L495.9 269.1 L445.2 288.4Z" fill="none" stroke="#111" stroke-width="1.3"/><path d="M429.3 262.8 L481.9 266.9 M455.2 252.4 L455.8 277.9" stroke="#111" stroke-width="1.1"/>
<path d="M142.2 412.7 L169.2 402.2 L175.8 418.3 L148.2 429.3Z" fill="none" stroke="#fff" stroke-width="1.2"/>
<path d="M289.4 355.9 L311.8 347.3 L321.2 360.6 L298.4 369.7Z" fill="none" stroke="#fff" stroke-width="1.2"/>
<path d="M412.0 308.7 L430.9 301.4 L442.1 312.6 L423.0 320.2Z" fill="none" stroke="#fff" stroke-width="1.2"/>
<path d="M515.8 268.6 L531.9 262.5 L544.3 272.0 L528.1 278.4Z" fill="none" stroke="#fff" stroke-width="1.2"/>
<path d="M604.8 234.4 L618.7 229.0 L631.8 237.2 L617.8 242.8Z" fill="none" stroke="#fff" stroke-width="1.2"/>
<path d="M682.0 204.6 L694.1 200.0 L707.6 207.1 L695.4 212.0Z" fill="none" stroke="#fff" stroke-width="1.2"/>
<path d="M749.4 178.6 L760.1 174.5 L773.9 180.8 L763.2 185.1Z" fill="none" stroke="#fff" stroke-width="1.2"/>
<path d="M780.1 166.8 L790.1 163.0 L804.0 168.9 L793.9 172.9Z" fill="none" stroke="#fff" stroke-width="1.2"/>
<path d="M158.8 415.1 L305.0 358.0 L312.1 403.8 L172.9 462.9Z" fill="#a97171"/>
<path d="M158.8 415.1 L168.8 411.2 L178.7 407.4 L188.4 403.6 L198.0 399.8 L207.5 396.1 L216.9 392.4 L226.2 388.8 L235.4 385.2 L244.5 381.6 L253.4 378.1 L262.3 374.7 L271.0 371.3 L279.7 367.9 L288.2 364.5 L296.7 361.2 L305.0 358.0 L313.3 354.7 L321.4 351.6 L329.5 348.4 L337.5 345.3 L345.4 342.2 L353.2 339.1 L360.9 336.1 L368.6 333.1 L376.1 330.2 L383.6 327.3 L391.0 324.4 L398.3 321.5 L405.5 318.7 L412.7 315.9 L419.8 313.1 L426.8 310.4 L433.7 307.7 L440.6 305.0 L447.4 302.3 L454.1 299.7 L460.8 297.1 L467.4 294.5 L473.9 292.0 L480.3 289.4 L486.7 286.9 L493.1 284.5 L499.3 282.0 L505.5 279.6 L511.7 277.2 L517.8 274.8 L523.8 272.4 L529.8 270.1 L535.7 267.8 L541.5 265.5 L547.3 263.2 L553.1 261.0 L558.8 258.8 L564.4 256.6 L570.0 254.4 L575.5 252.2 L581.0 250.1 L586.4 248.0 L591.8 245.9 L597.2 243.8 L602.4 241.7 L607.7 239.7 L612.9 237.6 L618.0 235.6 L623.1 233.6 L628.2 231.7 L633.2 229.7 L638.1 227.8 L643.1 225.8 L647.9 223.9 L652.8 222.0 L657.6 220.2 L662.3 218.3 L667.0 216.5 L671.7 214.6 L676.3 212.8 L680.9 211.0 L685.5 209.3 L690.0 207.5 L694.5 205.7 L698.9 204.0 L703.3 202.3 L707.7 200.6 L712.0 198.9 L716.3 197.2 L720.6 195.5 L724.8 193.9 L729.0 192.2 L733.1 190.6 L737.3 189.0 L741.4 187.4 L745.4 185.8 L749.4 184.2 L753.4 182.7 L757.4 181.1 L761.3 179.6 L765.2 178.1 L769.1 176.6 L773.0 175.1 L776.8 173.6 L780.5 172.1 L784.3 170.6 L788.0 169.2 L791.7 167.7 L789.4 177.9 L785.7 179.6 L781.8 182.2 L777.9 184.4 L774.0 186.4 L770.2 187.8 L766.6 188.7 L763.0 188.9 L759.2 190.0 L755.5 190.7 L751.5 192.6 L747.4 194.9 L743.2 197.1 L739.1 199.2 L735.0 201.3 L730.8 203.3 L726.6 205.1 L722.5 206.8 L718.3 208.4 L714.1 209.8 L709.9 211.0 L705.8 212.0 L701.6 212.8 L697.3 213.9 L692.9 215.7 L688.5 217.1 L684.0 219.2 L679.3 221.7 L674.7 224.2 L670.0 226.6 L665.3 228.9 L660.6 231.1 L655.9 233.2 L651.1 235.1 L646.3 236.9 L641.5 238.5 L636.7 240.0 L631.9 241.3 L627.0 242.3 L622.1 243.6 L617.0 245.6 L611.9 247.3 L606.7 249.7 L601.5 252.5 L596.2 255.2 L590.8 257.9 L585.5 260.5 L580.1 262.9 L574.6 265.3 L569.1 267.5 L563.6 269.6 L558.0 271.6 L552.4 273.3 L546.8 274.9 L541.1 276.2 L535.3 277.9 L529.4 280.2 L523.8 272.4 L517.7 277.8 L511.5 286.4 L505.3 294.2 L499.1 301.4 L493.0 307.6 L486.7 312.9 L480.5 317.1 L474.2 320.0 L467.8 321.6 L461.3 321.6 L454.7 320.0 L447.8 316.6 L440.8 310.7 L433.7 307.7 L426.8 310.4 L419.8 313.1 L412.9 319.3 L406.2 329.2 L399.5 338.2 L392.7 346.4 L385.8 353.6 L378.8 359.7 L371.7 364.5 L364.3 368.0 L356.6 369.9 L348.7 370.0 L340.4 368.4 L331.7 364.7 L322.3 358.1 L313.3 354.7 L305.8 362.9 L297.5 366.1 L289.0 369.5 L280.5 372.8 L271.9 376.2 L263.2 379.6 L254.4 383.1 L245.5 386.6 L236.5 390.2 L227.4 393.8 L218.1 397.4 L208.8 401.1 L199.3 404.9 L189.8 408.6 L180.1 412.5 L170.2 416.3 L160.3 420.2Z" fill="#e63a3a" stroke="#960e0e" stroke-width="0.8" stroke-linejoin="round"/>
<path d="M158.8 415.1 L168.8 411.2 L178.7 407.4 L188.4 403.6 L198.0 399.8 L207.5 396.1 L216.9 392.4 L226.2 388.8 L235.4 385.2 L244.5 381.6 L253.4 378.1 L262.3 374.7 L271.0 371.3 L279.7 367.9 L288.2 364.5 L296.7 361.2 L305.0 358.0 L313.3 354.7 L321.4 351.6 L329.5 348.4 L337.5 345.3 L345.4 342.2 L353.2 339.1 L360.9 336.1 L368.6 333.1 L376.1 330.2 L383.6 327.3 L391.0 324.4 L398.3 321.5 L405.5 318.7 L412.7 315.9 L419.8 313.1 L426.8 310.4 L433.7 307.7 L440.6 305.0 L447.4 302.3 L454.1 299.7 L460.8 297.1 L467.4 294.5 L473.9 292.0 L480.3 289.4 L486.7 286.9 L493.1 284.5 L499.3 282.0 L505.5 279.6 L511.7 277.2 L517.8 274.8 L523.8 272.4 L529.8 270.1 L535.7 267.8 L541.5 265.5 L547.3 263.2 L553.1 261.0 L558.8 258.8 L564.4 256.6 L570.0 254.4 L575.5 252.2 L581.0 250.1 L586.4 248.0 L591.8 245.9 L597.2 243.8 L602.4 241.7 L607.7 239.7 L612.9 237.6 L618.0 235.6 L623.1 233.6 L628.2 231.7 L633.2 229.7 L638.1 227.8 L643.1 225.8 L647.9 223.9 L652.8 222.0 L657.6 220.2 L662.3 218.3 L667.0 216.5 L671.7 214.6 L676.3 212.8 L680.9 211.0 L685.5 209.3 L690.0 207.5 L694.5 205.7 L698.9 204.0 L703.3 202.3 L707.7 200.6 L712.0 198.9 L716.3 197.2 L720.6 195.5 L724.8 193.9 L729.0 192.2 L733.1 190.6 L737.3 189.0 L741.4 187.4 L745.4 185.8 L749.4 184.2 L753.4 182.7 L757.4 181.1 L761.3 179.6 L765.2 178.1 L769.1 176.6 L773.0 175.1 L776.8 173.6 L780.5 172.1 L784.3 170.6 L788.0 169.2 L791.7 167.7 L789.4 177.9 L785.7 179.6 L781.8 182.2 L777.9 184.4 L774.0 186.4 L770.2 187.8 L766.6 188.7 L763.0 188.9 L759.2 190.0 L755.5 190.7 L751.5 192.6 L747.4 194.9 L743.2 197.1 L739.1 199.2 L735.0 201.3 L730.8 203.3 L726.6 205.1 L722.5 206.8 L718.3 208.4 L714.1 209.8 L709.9 211.0 L705.8 212.0 L701.6 212.8 L697.3 213.9 L692.9 215.7 L688.5 217.1 L684.0 219.2 L679.3 221.7 L674.7 224.2 L670.0 226.6 L665.3 228.9 L660.6 231.1 L655.9 233.2 L651.1 235.1 L646.3 236.9 L641.5 238.5 L636.7 240.0 L631.9 241.3 L627.0 242.3 L622.1 243.6 L617.0 245.6 L611.9 247.3 L606.7 249.7 L601.5 252.5 L596.2 255.2 L590.8 257.9 L585.5 260.5 L580.1 262.9 L574.6 265.3 L569.1 267.5 L563.6 269.6 L558.0 271.6 L552.4 273.3 L546.8 274.9 L541.1 276.2 L535.3 277.9 L529.4 280.2 L523.8 272.4 L517.7 277.8 L511.5 286.4 L505.3 294.2 L499.1 301.4 L493.0 307.6 L486.7 312.9 L480.5 317.1 L474.2 320.0 L467.8 321.6 L461.3 321.6 L454.7 320.0 L447.8 316.6 L440.8 310.7 L433.7 307.7 L426.8 310.4 L419.8 313.1 L412.9 319.3 L406.2 329.2 L399.5 338.2 L392.7 346.4 L385.8 353.6 L378.8 359.7 L371.7 364.5 L364.3 368.0 L356.6 369.9 L348.7 370.0 L340.4 368.4 L331.7 364.7 L322.3 358.1 L313.3 354.7 L305.8 362.9 L297.5 366.1 L289.0 369.5 L280.5 372.8 L271.9 376.2 L263.2 379.6 L254.4 383.1 L245.5 386.6 L236.5 390.2 L227.4 393.8 L218.1 397.4 L208.8 401.1 L199.3 404.9 L189.8 408.6 L180.1 412.5 L170.2 416.3 L160.3 420.2Z" fill="#b35656" stroke="#960e0e" stroke-width="0.8" stroke-linejoin="round" clip-path="url(#cs)"/>
<path d="M158.8 415.1 L160.3 420.2 M174.7 408.9 L176.1 414.0 M190.3 402.8 L191.7 407.9 M205.6 396.8 L206.9 401.9 M220.7 390.9 L221.8 396.0 M235.4 385.2 L236.5 390.2 M249.8 379.5 L250.9 384.5 M264.0 374.0 L265.0 379.0 M277.9 368.6 L278.8 373.5 M291.6 363.2 L292.4 368.1 M305.0 358.0 L305.8 362.9 M331.1 347.8 L333.5 365.6 M343.8 342.8 L347.1 369.9 M356.3 337.9 L359.7 369.3 M368.6 333.1 L371.7 364.5 M380.6 328.4 L383.1 356.2 M392.4 323.8 L394.1 344.8 M404.1 319.2 L404.9 331.0 M448.7 301.8 L449.2 317.5 M459.4 297.6 L460.0 321.4 M470.0 293.5 L470.4 321.1 M480.3 289.4 L480.5 317.1 M490.5 285.5 L490.5 309.9 M500.6 281.5 L500.4 300.0 M510.5 277.7 L510.3 288.0 M529.8 270.1 L529.4 280.2 M539.2 266.4 L538.8 276.5 M548.5 262.8 L547.9 274.6 M557.6 259.2 L556.9 271.9 M566.7 255.7 L565.8 268.8 M575.5 252.2 L574.6 265.3 M584.3 248.8 L583.3 261.5 M592.9 245.4 L591.9 257.3 M601.4 242.1 L600.4 253.0 M609.8 238.8 L608.8 248.5 M618.0 235.6 L617.0 245.6 M626.2 232.4 L625.1 242.4 M634.2 229.3 L632.8 241.0 M642.1 226.2 L640.6 238.8 M649.9 223.2 L648.2 236.2 M657.6 220.2 L655.9 233.2 M665.1 217.2 L663.4 229.8 M672.6 214.3 L670.9 226.1 M680.0 211.4 L678.4 222.2 M687.3 208.5 L685.8 218.2 M694.5 205.7 L693.0 215.3 M701.6 203.0 L699.9 212.9 M708.5 200.2 L706.6 211.9 M715.4 197.5 L713.3 210.0 M722.3 194.9 L720.0 207.8 M729.0 192.2 L726.6 205.1 M735.6 189.7 L733.3 202.1 M742.2 187.1 L739.9 198.8 M748.6 184.6 L746.5 195.3 M755.0 182.1 L753.1 191.6 M761.3 179.6 L759.4 189.1 M767.6 177.2 L765.1 188.9 M773.7 174.8 L771.0 187.6 M779.8 172.4 L777.1 184.9 M785.8 170.0 L783.3 181.2 M791.7 167.7 L789.4 177.9" stroke="#960e0e" stroke-width="0.7" fill="none" opacity="0.75"/>
<path d="M158.8 415.1 L168.8 411.2 L178.7 407.4 L188.4 403.6 L198.0 399.8 L207.5 396.1 L216.9 392.4 L226.2 388.8 L235.4 385.2 L244.5 381.6 L253.4 378.1 L262.3 374.7 L271.0 371.3 L279.7 367.9 L288.2 364.5 L296.7 361.2 L305.0 358.0 L313.3 354.7 L321.4 351.6 L329.5 348.4 L337.5 345.3 L345.4 342.2 L353.2 339.1 L360.9 336.1 L368.6 333.1 L376.1 330.2 L383.6 327.3 L391.0 324.4 L398.3 321.5 L405.5 318.7 L412.7 315.9 L419.8 313.1 L426.8 310.4 L433.7 307.7 L440.6 305.0 L447.4 302.3 L454.1 299.7 L460.8 297.1 L467.4 294.5 L473.9 292.0 L480.3 289.4 L486.7 286.9 L493.1 284.5 L499.3 282.0 L505.5 279.6 L511.7 277.2 L517.8 274.8 L523.8 272.4 L529.8 270.1 L535.7 267.8 L541.5 265.5 L547.3 263.2 L553.1 261.0 L558.8 258.8 L564.4 256.6 L570.0 254.4 L575.5 252.2 L581.0 250.1 L586.4 248.0 L591.8 245.9 L597.2 243.8 L602.4 241.7 L607.7 239.7 L612.9 237.6 L618.0 235.6 L623.1 233.6 L628.2 231.7 L633.2 229.7 L638.1 227.8 L643.1 225.8 L647.9 223.9 L652.8 222.0 L657.6 220.2 L662.3 218.3 L667.0 216.5 L671.7 214.6 L676.3 212.8 L680.9 211.0 L685.5 209.3 L690.0 207.5 L694.5 205.7 L698.9 204.0 L703.3 202.3 L707.7 200.6 L712.0 198.9 L716.3 197.2 L720.6 195.5 L724.8 193.9 L729.0 192.2 L733.1 190.6 L737.3 189.0 L741.4 187.4 L745.4 185.8 L749.4 184.2 L753.4 182.7 L757.4 181.1 L761.3 179.6 L765.2 178.1 L769.1 176.6 L773.0 175.1 L776.8 173.6 L780.5 172.1 L784.3 170.6 L788.0 169.2 L791.7 167.7 L795.2 152.3 L790.0 160.4 L784.9 167.7 L780.6 172.1 L776.8 173.6 L773.0 175.1 L769.3 175.6 L766.9 169.9 L765.3 160.2 L760.1 168.0 L754.8 175.6 L749.9 181.7 L745.4 185.8 L741.4 187.4 L737.3 189.0 L733.1 190.6 L729.0 192.2 L724.8 193.9 L720.6 195.5 L716.3 197.2 L712.2 197.9 L708.3 196.6 L704.8 193.2 L701.4 188.7 L697.8 184.3 L692.5 191.5 L687.0 198.8 L681.7 205.6 L676.6 210.8 L671.7 214.6 L667.0 216.5 L662.3 218.3 L657.6 220.2 L652.8 222.0 L647.9 223.9 L643.1 225.8 L638.3 226.8 L633.6 225.7 L629.2 222.5 L624.7 218.3 L620.2 214.0 L614.5 221.5 L608.7 229.2 L602.9 236.3 L597.3 241.7 L591.8 245.8 L586.4 248.0 L581.0 250.1 L575.5 252.2 L570.0 254.4 L564.4 256.6 L558.8 258.8 L553.2 259.1 L547.7 255.7 L542.3 248.0 L536.8 238.1 L531.2 228.1 L524.7 241.2 L518.3 254.6 L511.9 266.7 L505.6 275.7 L499.3 282.0 L493.1 284.5 L486.7 286.9 L480.3 289.4 L473.9 292.0 L467.4 294.5 L460.8 297.1 L454.1 297.5 L447.1 293.9 L439.9 285.3 L432.3 274.4 L424.5 263.3 L417.8 278.2 L411.3 293.3 L404.7 307.0 L398.0 317.1 L391.0 324.3 L383.6 327.3 L376.1 330.2 L368.6 333.1 L360.9 336.1 L353.2 339.1 L345.4 342.2 L337.2 342.8 L328.2 338.8 L318.3 329.3 L307.7 316.9 L296.6 304.2 L290.2 321.4 L283.8 338.8 L277.3 354.6 L270.1 366.3 L261.4 370.0 L252.5 373.5 L243.5 376.9 L234.4 380.5 L225.1 384.0 L215.8 387.7 L206.4 391.3 L196.8 395.0 L187.1 398.8 L177.3 402.6 L167.4 406.4 L157.4 410.3Z" fill="#e9e232" stroke="#960e0e" stroke-width="1.25" stroke-linejoin="round"/>
<path d="M296.6 304.2 L290.4 320.7 L298.7 317.7Z" fill="#f0b41a" opacity="0.85"/>
<path d="M424.5 263.3 L418.1 277.6 L425.0 275.0Z" fill="#f0b41a" opacity="0.85"/>
<path d="M531.2 228.1 L525.0 240.7 L530.9 238.5Z" fill="#f0b41a" opacity="0.85"/>
<path d="M158.8 415.1 L157.4 410.3 M174.7 408.9 L173.4 404.1 M190.3 402.8 L189.1 398.0 M205.6 396.8 L204.5 392.1 M220.7 390.9 L219.6 386.2 M235.4 385.2 L234.4 380.5 M249.8 379.5 L248.9 374.9 M264.0 374.0 L263.1 369.3 M277.9 368.6 L276.0 357.6 M291.6 363.2 L286.4 332.0 M305.0 358.0 L296.6 304.2 M318.2 352.8 L314.1 324.6 M331.1 347.8 L330.1 339.8 M404.1 319.2 L403.4 309.6 M415.5 314.8 L413.9 287.3 M426.8 310.4 L424.5 263.3 M437.9 306.0 L436.9 281.2 M448.7 301.8 L448.5 294.8 M510.5 277.7 L510.6 269.0 M520.2 273.9 L520.9 249.3 M529.8 270.1 L531.2 228.1 M539.2 266.4 L540.1 244.2 M548.5 262.8 L548.8 256.5 M601.4 242.1 L601.8 237.6 M609.8 238.8 L611.0 226.1 M618.0 235.6 L620.2 214.0 M626.2 232.4 L627.4 220.9 M634.2 229.3 L634.5 226.0 M680.0 211.4 L680.7 206.9 M687.3 208.5 L689.2 195.9 M694.5 205.7 L697.8 184.3 M701.6 203.0 L703.4 191.5 M708.5 200.2 L709.1 197.0 M748.6 184.6 L749.0 182.7 M755.0 182.1 L756.9 172.7 M761.3 179.6 L765.3 160.2 M767.6 177.2 L768.2 174.2 M785.8 170.0 L786.9 165.0 M791.7 167.7 L795.2 152.3" stroke="#960e0e" stroke-width="0.9" fill="none"/>
<path d="M174.5 502.1 L204.7 488.5 L213.8 510.4 L182.7 524.9Z" fill="none" stroke="#fff" stroke-width="1.2"/>
<path d="M337.3 428.9 L361.7 417.9 L374.2 435.6 L349.3 447.2Z" fill="none" stroke="#fff" stroke-width="1.2"/>
<path d="M469.8 369.3 L489.9 360.3 L504.5 374.8 L484.1 384.3Z" fill="none" stroke="#fff" stroke-width="1.2"/>
<path d="M194.0 506.2 L205.2 501.1 L216.2 496.1 L227.1 491.1 L237.8 486.2 L248.4 481.4 L258.8 476.6 L269.1 471.9 L279.2 467.2 L289.2 462.7 L299.1 458.1 L308.8 453.7 L318.5 449.3 L327.9 444.9 L337.3 440.6 L346.5 436.4 L355.7 432.2 L364.7 428.1 L373.6 424.1 L382.3 420.0 L391.0 416.1 L399.6 412.1 L408.0 408.3 L416.4 404.5 L424.6 400.7 L432.7 397.0 L440.8 393.3 L448.7 389.6 L456.6 386.0 L464.4 382.5 L472.0 379.0 L479.6 375.5 L487.1 372.1 L487.1 383.9 L479.7 390.5 L472.3 397.2 L464.8 403.8 L457.2 409.9 L449.6 415.7 L441.9 421.6 L434.2 427.6 L426.4 433.6 L418.1 432.2 L409.6 430.7 L400.9 429.2 L392.0 427.7 L382.9 426.1 L373.6 424.5 L364.7 428.1 L355.7 432.2 L346.5 436.4 L337.3 440.6 L327.9 444.9 L318.5 449.3 L309.2 456.1 L300.3 465.1 L291.4 474.2 L282.4 483.3 L273.3 492.4 L264.2 501.6 L254.2 506.7 L243.3 509.0 L232.2 511.3 L220.8 513.7 L209.3 516.2 L197.6 518.6Z" fill="#e63a3a" stroke="#960e0e" stroke-width="0.8" stroke-linejoin="round"/>
<path d="M194.0 506.2 L205.2 501.1 L216.2 496.1 L227.1 491.1 L237.8 486.2 L248.4 481.4 L258.8 476.6 L269.1 471.9 L279.2 467.2 L289.2 462.7 L299.1 458.1 L308.8 453.7 L318.5 449.3 L327.9 444.9 L337.3 440.6 L346.5 436.4 L355.7 432.2 L364.7 428.1 L373.6 424.1 L382.3 420.0 L391.0 416.1 L399.6 412.1 L408.0 408.3 L416.4 404.5 L424.6 400.7 L432.7 397.0 L440.8 393.3 L448.7 389.6 L456.6 386.0 L464.4 382.5 L472.0 379.0 L479.6 375.5 L487.1 372.1 L487.1 383.9 L479.7 390.5 L472.3 397.2 L464.8 403.8 L457.2 409.9 L449.6 415.7 L441.9 421.6 L434.2 427.6 L426.4 433.6 L418.1 432.2 L409.6 430.7 L400.9 429.2 L392.0 427.7 L382.9 426.1 L373.6 424.5 L364.7 428.1 L355.7 432.2 L346.5 436.4 L337.3 440.6 L327.9 444.9 L318.5 449.3 L309.2 456.1 L300.3 465.1 L291.4 474.2 L282.4 483.3 L273.3 492.4 L264.2 501.6 L254.2 506.7 L243.3 509.0 L232.2 511.3 L220.8 513.7 L209.3 516.2 L197.6 518.6Z" fill="#b35656" stroke="#960e0e" stroke-width="0.8" stroke-linejoin="round" clip-path="url(#cs)"/>
<path d="M194.0 506.2 L197.6 518.6 M211.8 498.1 L216.3 514.7 M229.2 490.1 L234.4 510.8 M246.3 482.3 L252.0 507.1 M262.9 474.7 L267.9 497.9 M279.2 467.2 L282.4 483.3 M295.2 459.9 L296.7 468.7 M310.8 452.8 L311.0 454.3 M384.1 419.2 L384.7 426.4 M397.8 412.9 L399.1 428.9 M411.4 406.7 L413.0 431.3 M424.6 400.7 L426.4 433.6 M437.6 394.7 L438.9 424.0 M450.3 388.9 L451.1 414.5 M462.8 383.2 L463.3 405.2 M475.1 377.6 L475.2 394.5" stroke="#960e0e" stroke-width="0.7" fill="none" opacity="0.75"/>
<path d="M194.0 506.2 L205.2 501.1 L216.2 496.1 L227.1 491.1 L237.8 486.2 L248.4 481.4 L258.8 476.6 L269.1 471.9 L279.2 467.2 L289.2 462.7 L299.1 458.1 L308.8 453.7 L318.5 449.3 L327.9 444.9 L337.3 440.6 L346.5 436.4 L355.7 432.2 L364.7 428.1 L373.6 424.1 L382.3 420.0 L391.0 416.1 L399.6 412.1 L408.0 408.3 L416.4 404.5 L424.6 400.7 L432.7 397.0 L440.8 393.3 L448.7 389.6 L456.6 386.0 L464.4 382.5 L472.0 379.0 L479.6 375.5 L487.1 372.1 L487.1 328.1 L479.4 342.9 L471.8 357.9 L464.1 371.6 L456.5 382.0 L448.7 389.6 L440.8 393.3 L432.7 397.0 L424.6 400.7 L416.4 404.5 L408.0 408.3 L399.6 412.1 L390.8 413.6 L381.4 410.2 L371.2 401.3 L360.4 389.4 L349.1 377.3 L341.3 395.8 L333.7 414.4 L326.0 431.4 L317.7 444.2 L308.8 453.6 L299.1 458.1 L289.2 462.7 L279.2 467.2 L269.1 471.9 L258.8 476.6 L248.3 481.1 L237.5 485.0 L226.4 488.4 L215.0 491.3 L203.3 494.1 L191.4 497.0Z" fill="#e9e232" stroke="#960e0e" stroke-width="1.25" stroke-linejoin="round"/>
<path d="M349.1 377.3 L341.6 395.0 L350.7 391.1Z" fill="#f0b41a" opacity="0.85"/>
<path d="M487.1 328.1 L479.7 342.3 L487.1 339.1Z" fill="#f0b41a" opacity="0.85"/>
<path d="M194.0 506.2 L191.4 497.0 M211.8 498.1 L210.3 492.4 M326.1 445.8 L324.4 434.7 M341.0 438.9 L336.7 407.1 M355.7 432.2 L349.1 377.3 M370.0 425.7 L367.0 396.8 M384.1 419.2 L383.3 411.1 M462.8 383.2 L462.6 374.2 M475.1 377.6 L474.8 352.0 M487.1 372.1 L487.1 328.1" stroke="#960e0e" stroke-width="0.9" fill="none"/>
<path d="M76.0 197.5 L112.5 188.6 M151.8 179.1 L217.1 163.2 M251.6 154.8 L309.3 140.9 M339.8 133.5 L391.0 121.0 M418.2 114.4 L464.1 103.3 M488.5 97.4 L529.7 87.4 M551.8 82.0 L589.0 73.0 M609.0 68.1 L626.2 64.0 M90.8 229.4 L181.2 205.6 M196.1 201.6 L275.8 180.6 M289.0 177.1 L359.7 158.5 M371.5 155.3 L434.7 138.7 M445.2 135.9 L502.0 120.9 M511.5 118.4 L562.9 104.8 M571.5 102.6 L618.1 90.3 M90.3 234.2 L129.7 223.7 M171.9 212.4 L241.7 193.8 M278.3 184.1 L339.3 167.8 M371.4 159.2 L425.1 144.9 M453.5 137.3 L501.1 124.6 M526.4 117.9 L569.0 106.5 M591.7 100.5 L629.9 90.3 M621.8 92.5 L658.1 82.8 M650.4 84.8 L667.9 80.2 M105.9 267.8 L202.9 239.8 M218.8 235.2 L303.4 210.7 M317.3 206.6 L391.7 185.1 M404.0 181.6 L469.9 162.5 M480.9 159.3 L539.7 142.3 M549.5 139.4 L602.3 124.2 M611.1 121.6 L658.8 107.8 M194.2 249.5 L268.7 227.5 M307.6 216.1 L372.0 197.2 M358.4 201.2 L418.5 183.5 M405.8 187.2 L461.9 170.7 M491.5 162.0 L540.9 147.5 M567.0 139.8 L610.8 126.9 M634.1 120.1 L673.2 108.6 M661.9 111.9 L699.1 101.0 M694.0 102.5 L711.9 97.2 M122.8 310.6 L226.8 277.5 M243.8 272.1 L333.4 243.5 M348.2 238.8 L426.2 214.0 M439.1 209.9 L507.7 188.0 M519.0 184.4 L579.7 165.0 M589.8 161.8 L644.0 144.6 M653.0 141.7 L701.6 126.2 M127.2 328.8 L173.7 313.5 M222.9 297.2 L303.3 270.6 M344.9 256.9 L413.3 234.3 M404.1 237.3 L467.0 216.5 M449.0 222.5 L507.9 203.0 M538.8 192.8 L590.1 175.8 M617.1 166.9 L662.2 152.0 M686.0 144.1 L725.9 130.9 M717.5 133.7 L736.6 127.4 M144.7 366.0 L257.4 325.7 M275.7 319.2 L371.4 285.0 M387.1 279.4 L469.4 250.0 M482.9 245.2 L554.4 219.6 M566.2 215.4 L629.0 193.0 M639.4 189.3 L694.9 169.5 M257.1 353.9 L343.9 321.3 M388.5 304.5 L461.2 277.2 M498.8 263.1 L560.5 239.9 M592.7 227.8 L645.8 207.8 M673.6 197.4 L719.8 180.0 M744.0 170.9 L784.5 155.7 M775.9 158.9 L795.3 151.6 M170.8 432.0 L293.4 382.4 M313.1 374.5 L415.5 333.1 M432.0 326.4 L518.8 291.3 M529.2 287.1 L788.5 182.2 M187.4 483.2 L244.5 458.0 M303.9 431.7 L398.9 389.9 M447.1 368.6 L487.1 350.9 M206.9 523.3 L481.2 393.7" stroke="#1414f0" stroke-width="1.25" fill="none"/>
</g>
<defs><linearGradient id="tg" x1="0" y1="0" x2="0" y2="1">
<stop offset="0" stop-color="#9db9d9"/><stop offset="0.35" stop-color="#bcd1ea"/><stop offset="0.5" stop-color="#b4cbe8"/><stop offset="0.55" stop-color="#a3bfe1"/><stop offset="0.75" stop-color="#9dbbdf"/><stop offset="1" stop-color="#b9d0ec"/></linearGradient></defs>
<rect x="0" y="0" width="944" height="21" fill="#d9d9d9"/>
<rect x="0" y="0" width="944" height="1" fill="#6e6e6e"/>
<rect x="0" y="1" width="668" height="1" fill="#8a8a8a"/>
<rect x="668" y="1" width="276" height="1" fill="#b0b0b0"/>
<rect x="0" y="20" width="15" height="1" fill="#6e6e6e"/>
<rect x="668" y="20" width="276" height="1" fill="#6e6e6e"/>
<path d="M15 21 L15 4 L17 2 L666 2 L668 4 L668 21 Z" fill="url(#tg)"/>
<path d="M14.5 20.5 L14.5 4 L16.5 1.5" fill="none" stroke="#707070" stroke-width="1"/>
<path d="M666.5 1.5 L668.5 4 L668.5 20.5" fill="none" stroke="#707070" stroke-width="1"/>
<rect x="0" y="0" width="1" height="585" fill="#6e6e6e"/>
<rect x="943" y="0" width="1" height="585" fill="#6e6e6e"/>
<rect x="0" y="584" width="944" height="1" fill="#6e6e6e"/>
<g font-family="Liberation Sans, sans-serif" font-size="12" fill="#0a0a1e">
<text x="41.5" y="14.6" textLength="46" lengthAdjust="spacingAndGlyphs">3-D View</text>
<text x="94.7" y="14.6" textLength="491.5" lengthAdjust="spacingAndGlyphs">Slab Strip Design - Layer B - Top and Bottom Reinforcement Intensity (Enveloping Flexural) [in</text>
<text x="587.3" y="10.5" font-size="7.5">2</text><text x="592" y="14.6" textLength="15" lengthAdjust="spacingAndGlyphs">/ft]</text></g>
<path d="M910.5 8.5 L917.5 8.5 L914 12.5 Z" fill="#111"/>
<path d="M927.5 6 L935.5 14 M935.5 6 L927.5 14" stroke="#111" stroke-width="1.4" fill="none"/>
</svg>
<div id="pop"><svg width="1400" height="585" viewBox="0 0 1400 585" font-family="Liberation Sans, sans-serif">
<defs>
<pattern id="hr" width="6.7" height="6.7" patternUnits="userSpaceOnUse"><path d="M-1 7.7 L7.7 -1 M-1 1 L1 -1 M5.7 7.7 L7.7 5.7" stroke="#f24a4a" stroke-width="1.25" fill="none"/></pattern>
<pattern id="hb" width="6.7" height="6.7" patternUnits="userSpaceOnUse"><path d="M-1 7.7 L7.7 -1 M-1 1 L1 -1 M5.7 7.7 L7.7 5.7" stroke="#4040f2" stroke-width="1.25" fill="none"/></pattern>
</defs>
<text x="981.3" y="92.7" font-size="13.5" font-weight="bold" fill="#111" textLength="235.5" lengthAdjust="spacing">ACI 318-14 Concrete Strip Design</text>
<text x="972.0" y="120.0" font-size="9.33" text-anchor="middle" font-weight="bold" fill="#111" textLength="94.0" lengthAdjust="spacingAndGlyphs">Geometric Properties</text>
<text x="1246.3" y="120.0" font-size="9.33" text-anchor="middle" font-weight="bold" fill="#111" textLength="83.5" lengthAdjust="spacingAndGlyphs">Material Properties</text>
<text x="971.7" y="135.0" font-size="8.4" text-anchor="middle" fill="#222" textLength="119.7" lengthAdjust="spacingAndGlyphs">Combination = Overall Envelope</text>
<text x="971.7" y="149.0" font-size="8.4" text-anchor="middle" fill="#222">Strip Label = MSB3</text>
<text x="971.7" y="163.0" font-size="8.4" text-anchor="middle" fill="#222">Length = 156 ft</text>
<text x="971.7" y="177.5" font-size="8.4" text-anchor="middle" fill="#222" textLength="149.6" lengthAdjust="spacingAndGlyphs">Distance to Top Rebar Center = 1.875 in</text>
<text x="971.7" y="191.7" font-size="8.4" text-anchor="middle" fill="#222" textLength="148.5" lengthAdjust="spacingAndGlyphs">Distance to Bot Rebar Center = 1.875 in</text>
<text x="1246.5" y="135.0" font-size="8.4" text-anchor="middle" fill="#222" textLength="143.7" lengthAdjust="spacingAndGlyphs">Concrete Comp. Strength = 4000 lb/in²</text>
<text x="1246.5" y="149.0" font-size="8.4" text-anchor="middle" fill="#222" textLength="141.5" lengthAdjust="spacingAndGlyphs">Concrete Modulus = 3604996.53 lb/in²</text>
<text x="1246.5" y="163.0" font-size="8.4" text-anchor="middle" fill="#222" textLength="144.5" lengthAdjust="spacingAndGlyphs">Longitudinal Rebar Yield = 60000 lb/in²</text>
<rect x="903.5" y="208.5" width="447" height="42.5" fill="#d3d3d3" stroke="#555" stroke-width="1"/>
<rect x="1039.8" y="229.6" width="25.7" height="41.9" fill="#d3d3d3" stroke="#555" stroke-width="1"/>
<rect x="1188.7" y="229.6" width="25.7" height="41.9" fill="#d3d3d3" stroke="#555" stroke-width="1"/>
<rect x="1338.3" y="229.6" width="12.2" height="41.9" fill="#d3d3d3" stroke="#555" stroke-width="1"/>
<path d="M903.5 272 L896.5 282.6 L910.5 282.6 Z" fill="#86e086" stroke="#4a9a4a" stroke-width="0.9"/>
<path d="M1052.5 272 L1045.5 282.6 L1059.5 282.6 Z" fill="#86e086" stroke="#4a9a4a" stroke-width="0.9"/>
<path d="M1201.5 272 L1194.5 282.6 L1208.5 282.6 Z" fill="#86e086" stroke="#4a9a4a" stroke-width="0.9"/>
<path d="M1350.5 272 L1343.5 282.6 L1357.5 282.6 Z" fill="#86e086" stroke="#4a9a4a" stroke-width="0.9"/>
<path d="M903.5 290.5 L1350.5 290.5 M903.5 285.8 V295.4 M1052.5 285.8 V295.4 M1201.5 285.8 V295.4 M1350.5 285.8 V295.4 M900.5 290.5 h3 M1049.5 290.5 h6 M1198.5 290.5 h6" stroke="#4a4af5" stroke-width="1" fill="none"/>
<text x="978.3" y="288.3" font-size="8.6" text-anchor="middle" fill="#4a4af0">Span 1</text>
<text x="977.5" y="304.0" font-size="8.2" text-anchor="middle" fill="#3030e0">24 ft</text>
<text x="1127.3" y="288.3" font-size="8.6" text-anchor="middle" fill="#4a4af0">Span 2</text>
<text x="1126.5" y="304.0" font-size="8.2" text-anchor="middle" fill="#3030e0">24 ft</text>
<text x="1276.3" y="288.3" font-size="8.6" text-anchor="middle" fill="#4a4af0">Span 3</text>
<text x="1275.5" y="304.0" font-size="8.2" text-anchor="middle" fill="#3030e0">24 ft</text>
<text x="1139.5" y="354.3" font-size="9.4" text-anchor="middle" font-weight="bold" fill="#222" textLength="123.0" lengthAdjust="spacingAndGlyphs">Moment Diagram (kip-ft)</text>
<polygon points="914.0,440.0 914.0,402.0 931.0,426.7 947.0,439.3 960.0,439.6 960.0,440.0" fill="url(#hr)"/>
<polyline points="914.0,402.0 931.0,426.7 947.0,439.3 960.0,439.6" fill="none" stroke="#f03838" stroke-width="1"/>
<polygon points="1003.6,440.0 1003.6,439.6 1016.0,439.3 1030.0,426.0 1047.0,402.5 1062.5,380.3 1076.0,402.0 1092.5,431.0 1108.0,438.0 1126.0,439.6 1126.0,440.0" fill="url(#hr)"/>
<polyline points="1003.6,439.6 1016.0,439.3 1030.0,426.0 1047.0,402.5 1062.5,380.3 1076.0,402.0 1092.5,431.0 1108.0,438.0 1126.0,439.6" fill="none" stroke="#f03838" stroke-width="1"/>
<polygon points="1165.6,440.0 1165.6,439.5 1181.0,438.0 1196.0,417.0 1211.8,395.7 1225.6,414.0 1242.0,429.7 1260.0,436.0 1313.0,435.4 1331.0,426.0 1348.7,406.7 1361.0,391.0 1361.0,440.0" fill="url(#hr)"/>
<polyline points="1165.6,439.5 1181.0,438.0 1196.0,417.0 1211.8,395.7 1225.6,414.0 1242.0,429.7 1260.0,436.0 1313.0,435.4 1331.0,426.0 1348.7,406.7 1361.0,391.0" fill="none" stroke="#f03838" stroke-width="1"/>
<polygon points="914.0,440.0 914.0,443.8 929.0,449.0 947.0,463.0 965.0,469.0 980.0,470.3 998.0,468.0 1014.0,464.0 1030.0,449.0 1047.0,441.0 1049.0,440.0" fill="url(#hb)"/>
<polyline points="914.0,440.0 914.0,443.8 929.0,449.0 947.0,463.0 965.0,469.0 980.0,470.3 998.0,468.0 1014.0,464.0 1030.0,449.0 1047.0,441.0 1049.0,440.0" fill="none" stroke="#3838f0" stroke-width="1"/>
<polygon points="1078.5,440.0 1092.5,445.6 1109.0,458.0 1127.0,464.4 1144.6,466.2 1163.0,460.0 1180.0,447.7 1194.0,441.3 1201.5,440.0" fill="url(#hb)"/>
<polyline points="1078.5,440.0 1092.5,445.6 1109.0,458.0 1127.0,464.4 1144.6,466.2 1163.0,460.0 1180.0,447.7 1194.0,441.3 1201.5,440.0" fill="none" stroke="#3838f0" stroke-width="1"/>
<polygon points="1225.6,440.0 1242.0,445.0 1259.5,449.0 1277.0,446.4 1313.0,445.6 1331.0,442.6 1346.0,440.0" fill="url(#hb)"/>
<polyline points="1225.6,440.0 1242.0,445.0 1259.5,449.0 1277.0,446.4 1313.0,445.6 1331.0,442.6 1346.0,440.0" fill="none" stroke="#3838f0" stroke-width="1"/>
<path d="M1062.5 364.4 V481.3 M1211.7 364.4 V481.3" stroke="#8c8c8c" stroke-width="1" stroke-dasharray="3 3" fill="none"/>
<path d="M914 440.5 H1361" stroke="#444" stroke-width="1"/>
<rect x="914.5" y="364.5" width="447" height="117" fill="none" stroke="#555" stroke-width="1"/><path d="M914.5 364.5 V481.5" stroke="#444" stroke-width="1.3"/>
<text x="910.3" y="367.5" font-size="8.4" text-anchor="end" fill="#333">-150</text>
<text x="910.3" y="443.2" font-size="8.4" text-anchor="end" fill="#333">0</text>
<text x="910.3" y="484.3" font-size="8.4" text-anchor="end" fill="#333">82</text>
<text x="905" y="504" font-size="8.6" text-anchor="end" fill="#333">(-)Moment</text>
<text x="917.0" y="504" font-size="8.6" text-anchor="start" fill="#333">-75.82</text>
<text x="987.5" y="504" font-size="8.6" text-anchor="middle" fill="#333">-1.1676</text>
<text x="1060.0" y="504" font-size="8.6" text-anchor="end" fill="#333">-119.4666</text>
<text x="1066.0" y="504" font-size="8.6" text-anchor="start" fill="#333">-119.4666</text>
<text x="1136.5" y="504" font-size="8.6" text-anchor="middle" fill="#333">-3.2051</text>
<text x="1209.5" y="504" font-size="8.6" text-anchor="end" fill="#333">-88.4998</text>
<text x="1216.0" y="504" font-size="8.6" text-anchor="start" fill="#333">-88.4998</text>
<text x="1285.5" y="504" font-size="8.6" text-anchor="middle" fill="#333">-9.4581</text>
<text x="1358.6" y="504" font-size="8.6" text-anchor="end" fill="#333">-105.3635</text>
<text x="905" y="524" font-size="8.6" text-anchor="end" fill="#333">(+)Moment</text>
<text x="917.0" y="524" font-size="8.6" text-anchor="start" fill="#333">44.7028</text>
<text x="987.5" y="524" font-size="8.6" text-anchor="middle" fill="#333">60.0454</text>
<text x="1060.0" y="524" font-size="8.6" text-anchor="end" fill="#333">15.1753</text>
<text x="1066.0" y="524" font-size="8.6" text-anchor="start" fill="#333">13.0065</text>
<text x="1136.5" y="524" font-size="8.6" text-anchor="middle" fill="#333">52.0659</text>
<text x="1209.5" y="524" font-size="8.6" text-anchor="end" fill="#333">14.2969</text>
<text x="1216.0" y="524" font-size="8.6" text-anchor="start" fill="#333">10.7997</text>
<text x="1285.5" y="524" font-size="8.6" text-anchor="middle" fill="#333">17.1695</text>
<text x="1358.6" y="524" font-size="8.6" text-anchor="end" fill="#333">6.8118</text>
</svg></div>
</body></html>
